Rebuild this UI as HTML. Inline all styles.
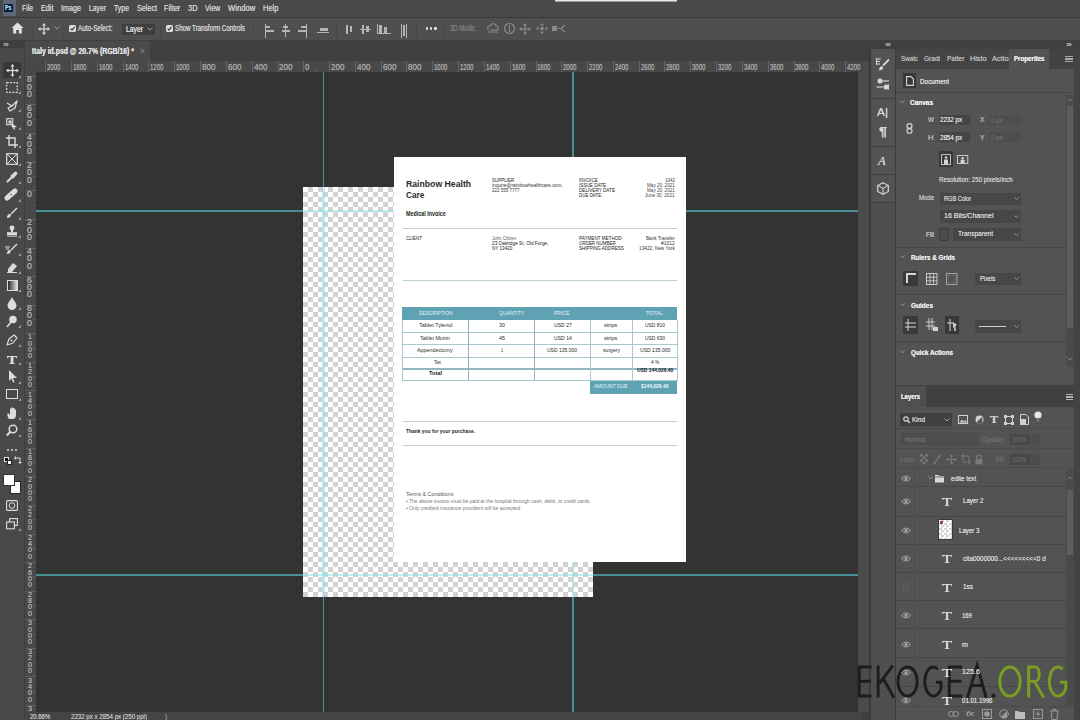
<!DOCTYPE html><html><head><meta charset="utf-8"><style>
*{margin:0;padding:0;box-sizing:border-box}
html,body{width:1080px;height:720px;overflow:hidden;background:#333;font-family:"Liberation Sans",sans-serif;color:#d0d0d0}
.a{position:absolute}
.t{position:absolute;white-space:nowrap;line-height:1;transform-origin:0 0}
svg{overflow:visible}
.t,svg{z-index:2}
.t{text-shadow:0 0 0.5px currentColor}
</style></head><body>
<div class="a" style="left:0px;top:0px;width:1080px;height:17px;background:#4a4a4a;"></div>
<div class="a" style="left:0px;top:17px;width:1080px;height:1px;background:#3a3a3a;"></div>
<div class="a" style="left:0px;top:18px;width:1080px;height:22px;background:#4f4f4f;"></div>
<div class="a" style="left:0px;top:40px;width:1080px;height:680px;background:#3f3f3f;"></div>
<div class="a" style="left:0px;top:40px;width:24px;height:680px;background:#494949;"></div>
<div class="a" style="left:25px;top:40px;width:838px;height:21px;background:#404040;"></div>
<div class="a" style="left:25px;top:41px;width:125px;height:20px;background:#4a4a4a;"></div>
<div class="a" style="left:25px;top:61px;width:838px;height:11px;background:#484848;"></div>
<div class="a" style="left:25px;top:72px;width:11px;height:640px;background:#484848;"></div>
<div class="a" style="left:36px;top:72px;width:822px;height:640px;background:#333333;"></div>
<div class="a" style="left:858px;top:72px;width:11px;height:640px;background:#4b4b4b;"></div>
<div class="a" style="left:25px;top:712px;width:838px;height:8px;background:#444444;"></div>
<div class="a" style="left:871px;top:49px;width:24px;height:671px;background:#4f4f4f;"></div>
<div class="a" style="left:896px;top:49px;width:178px;height:336px;background:#535353;"></div>
<div class="a" style="left:896px;top:385px;width:178px;height:335px;background:#535353;"></div>
<div class="a" style="left:2.5px;top:0px;width:13.5px;height:16px;background:#5d6778;"></div>
<div class="a" style="left:4px;top:4px;width:8.5px;height:8px;background:#03203a;border-radius:1px"></div>
<div class="t" style="left:5.00px;top:5.07px;font-size:6.5px;color:#9fd6e0;font-weight:bold;font-family:'Liberation Sans';transform:scaleX(0.792);">Ps</div>
<div class="t" style="left:22.00px;top:4.16px;font-size:9px;color:#d4d4d4;font-weight:normal;font-family:'Liberation Sans';transform:scaleX(0.758);">File</div>
<div class="t" style="left:40.50px;top:4.16px;font-size:9px;color:#d4d4d4;font-weight:normal;font-family:'Liberation Sans';transform:scaleX(0.806);">Edit</div>
<div class="t" style="left:61.00px;top:4.16px;font-size:9px;color:#d4d4d4;font-weight:normal;font-family:'Liberation Sans';transform:scaleX(0.800);">Image</div>
<div class="t" style="left:89.00px;top:4.16px;font-size:9px;color:#d4d4d4;font-weight:normal;font-family:'Liberation Sans';transform:scaleX(0.755);">Layer</div>
<div class="t" style="left:114.00px;top:4.16px;font-size:9px;color:#d4d4d4;font-weight:normal;font-family:'Liberation Sans';transform:scaleX(0.769);">Type</div>
<div class="t" style="left:136.70px;top:4.16px;font-size:9px;color:#d4d4d4;font-weight:normal;font-family:'Liberation Sans';transform:scaleX(0.800);">Select</div>
<div class="t" style="left:163.80px;top:4.16px;font-size:9px;color:#d4d4d4;font-weight:normal;font-family:'Liberation Sans';transform:scaleX(0.810);">Filter</div>
<div class="t" style="left:187.50px;top:4.16px;font-size:9px;color:#d4d4d4;font-weight:normal;font-family:'Liberation Sans';transform:scaleX(0.825);">3D</div>
<div class="t" style="left:204.80px;top:4.16px;font-size:9px;color:#d4d4d4;font-weight:normal;font-family:'Liberation Sans';transform:scaleX(0.785);">View</div>
<div class="t" style="left:227.80px;top:4.16px;font-size:9px;color:#d4d4d4;font-weight:normal;font-family:'Liberation Sans';transform:scaleX(0.850);">Window</div>
<div class="t" style="left:262.60px;top:4.16px;font-size:9px;color:#d4d4d4;font-weight:normal;font-family:'Liberation Sans';transform:scaleX(0.832);">Help</div>
<div class="a" style="left:555px;top:0px;width:122px;height:2px;background:#e6e6e6;border-bottom:1px solid #999"></div>
<div class="a" style="left:0px;top:40px;width:24px;height:8px;background:#3e3e3e;"></div>
<svg class="a" style="left:11px;top:22px;" width="13" height="12" viewBox="0 0 13 12" fill="none"><path d="M6.5 0.5 L12.5 6 L10.8 6 L10.8 11.5 L7.8 11.5 L7.8 8 L5.2 8 L5.2 11.5 L2.2 11.5 L2.2 6 L0.5 6 Z" fill="#e0e0e0"/></svg>
<svg class="a" style="left:37.5px;top:22.5px;" width="12" height="12" viewBox="0 0 12 12" fill="none"><g stroke="#d8d8d8" stroke-width="1.2"><line x1="6" y1="1.5" x2="6" y2="10.5"/><line x1="1.5" y1="6" x2="10.5" y2="6"/></g><g fill="#d8d8d8"><path d="M6 0 l-2 2.5 h4z"/><path d="M6 12 l-2 -2.5 h4z"/><path d="M0 6 l2.5 -2 v4z"/><path d="M12 6 l-2.5 -2 v4z"/></g></svg>
<svg class="a" style="left:54px;top:26px;" width="6" height="4" viewBox="0 0 6 4" fill="none"><path d="M0.5 0.5 L3 3 L5.5 0.5" stroke="#9a9a9a" stroke-width="1"/></svg>
<div class="a" style="left:32px;top:21px;width:1px;height:16px;background:#474747;"></div>
<div class="a" style="left:63px;top:21px;width:1px;height:16px;background:#474747;"></div>
<div class="a" style="left:69.0px;top:25.0px;width:7px;height:7px;background:#dcdcdc;border-radius:1.5px"></div>
<svg class="a" style="left:69.0px;top:25.0px;" width="7" height="7" viewBox="0 0 7 7" fill="none"><path d="M1.6 3.7 L3 5.1 L5.6 1.9" stroke="#3a3a3a" stroke-width="1.2"/></svg>
<div class="t" style="left:78.00px;top:24.46px;font-size:9px;color:#d6d6d6;font-weight:normal;font-family:'Liberation Sans';transform:scaleX(0.704);">Auto-Select:</div>
<div class="a" style="left:121.5px;top:23.5px;width:33px;height:11.5px;background:#3e3e3e;border-radius:1px"></div>
<div class="t" style="left:126.00px;top:24.90px;font-size:8.5px;color:#e0e0e0;font-weight:normal;font-family:'Liberation Sans';transform:scaleX(0.799);">Layer</div>
<svg class="a" style="left:147px;top:27px;" width="6" height="4" viewBox="0 0 6 4" fill="none"><path d="M0.5 0.5 L3 3 L5.5 0.5" stroke="#9a9a9a" stroke-width="1"/></svg>
<div class="a" style="left:160px;top:21px;width:1px;height:16px;background:#474747;"></div>
<div class="a" style="left:165.5px;top:25.0px;width:7px;height:7px;background:#dcdcdc;border-radius:1.5px"></div>
<svg class="a" style="left:165.5px;top:25.0px;" width="7" height="7" viewBox="0 0 7 7" fill="none"><path d="M1.6 3.7 L3 5.1 L5.6 1.9" stroke="#3a3a3a" stroke-width="1.2"/></svg>
<div class="t" style="left:175.00px;top:24.46px;font-size:9px;color:#d6d6d6;font-weight:normal;font-family:'Liberation Sans';transform:scaleX(0.689);">Show Transform Controls</div>
<div class="a" style="left:253px;top:21px;width:1px;height:16px;background:#474747;"></div>
<div class="a" style="left:265px;top:24px;width:1px;height:14px;background:#b4b4b4;"></div>
<div class="a" style="left:266px;top:26px;width:4px;height:2px;background:#b4b4b4;"></div>
<div class="a" style="left:266px;top:30px;width:8px;height:2px;background:#b4b4b4;"></div>
<div class="a" style="left:285px;top:24px;width:1px;height:13px;background:#b4b4b4;"></div>
<div class="a" style="left:283px;top:26px;width:5px;height:2px;background:#b4b4b4;"></div>
<div class="a" style="left:281.5px;top:30px;width:8px;height:2px;background:#b4b4b4;"></div>
<div class="a" style="left:306px;top:24px;width:1px;height:14px;background:#b4b4b4;"></div>
<div class="a" style="left:301px;top:26px;width:5px;height:2px;background:#b4b4b4;"></div>
<div class="a" style="left:298px;top:30px;width:8px;height:2px;background:#b4b4b4;"></div>
<div class="a" style="left:320px;top:28px;width:8px;height:3px;background:#b4b4b4;"></div>
<div class="a" style="left:317px;top:32px;width:12px;height:1px;background:#b4b4b4;"></div>
<div class="a" style="left:336px;top:21px;width:1px;height:16px;background:#474747;"></div>
<div class="a" style="left:346px;top:25px;width:2px;height:9px;background:#b4b4b4;"></div>
<div class="a" style="left:350px;top:26px;width:2px;height:6px;background:#b4b4b4;"></div>
<div class="a" style="left:362px;top:25px;width:2px;height:9px;background:#b4b4b4;"></div>
<div class="a" style="left:366px;top:26px;width:3px;height:6px;background:#b4b4b4;"></div>
<div class="a" style="left:360px;top:29px;width:11px;height:1px;background:#b4b4b4;"></div>
<div class="a" style="left:377px;top:24px;width:1px;height:10px;background:#b4b4b4;"></div>
<div class="a" style="left:379px;top:25px;width:3px;height:8px;background:#b4b4b4;"></div>
<div class="a" style="left:384px;top:27px;width:3px;height:6px;background:#b4b4b4;"></div>
<div class="a" style="left:377px;top:33px;width:14px;height:1px;background:#b4b4b4;"></div>
<div class="a" style="left:401px;top:24px;width:1px;height:14px;background:#b4b4b4;"></div>
<div class="a" style="left:403px;top:25px;width:2px;height:11px;background:#b4b4b4;"></div>
<div class="a" style="left:406px;top:24px;width:1px;height:14px;background:#b4b4b4;"></div>
<div class="a" style="left:416px;top:21px;width:1px;height:16px;background:#474747;"></div>
<div class="a" style="left:425.5px;top:27px;width:2.6px;height:2.6px;background:#e6e6e6;border-radius:50%"></div>
<div class="a" style="left:429.8px;top:27px;width:2.6px;height:2.6px;background:#e6e6e6;border-radius:50%"></div>
<div class="a" style="left:434.1px;top:27px;width:2.6px;height:2.6px;background:#e6e6e6;border-radius:50%"></div>
<div class="a" style="left:443px;top:21px;width:1px;height:16px;background:#474747;"></div>
<div class="t" style="left:450.00px;top:24.40px;font-size:8.5px;color:#7e7e7e;font-weight:normal;font-family:'Liberation Sans';transform:scaleX(0.705);">3D Mode:</div>
<svg class="a" style="left:486px;top:22px;" width="14" height="12" viewBox="0 0 14 12" fill="none"><path d="M3 7 C1 7 1 4 4 4 C5 1 10 1 10 4 C13 4 13 8 10 8 L4 8" stroke="#8a8a8a" stroke-width="1.2"/><path d="M2 10 L12 10" stroke="#8a8a8a" stroke-width="1"/></svg>
<svg class="a" style="left:503px;top:22px;" width="13" height="13" viewBox="0 0 13 13" fill="none"><circle cx="6.5" cy="6.5" r="5" stroke="#8a8a8a" stroke-width="1.2"/><path d="M6.5 3 V10" stroke="#8a8a8a" stroke-width="1"/></svg>
<svg class="a" style="left:519px;top:22.5px;" width="12" height="12" viewBox="0 0 12 12" fill="none"><g stroke="#8a8a8a" stroke-width="1.1"><line x1="6" y1="1.5" x2="6" y2="10.5"/><line x1="1.5" y1="6" x2="10.5" y2="6"/></g><g fill="#8a8a8a"><path d="M6 0 l-2 2.5 h4z"/><path d="M6 12 l-2 -2.5 h4z"/><path d="M0 6 l2.5 -2 v4z"/><path d="M12 6 l-2.5 -2 v4z"/></g></svg>
<svg class="a" style="left:536px;top:23px;" width="12" height="11" viewBox="0 0 12 11" fill="none"><g fill="#8a8a8a"><path d="M6 0 l-2 2.5 h4z"/><path d="M6 11 l-2 -2.5 h4z"/><path d="M0 5.5 l2.5 -2 v4z"/><path d="M12 5.5 l-2.5 -2 v4z"/></g><rect x="4.5" y="4" width="3" height="3" fill="#8a8a8a"/></svg>
<svg class="a" style="left:552px;top:23px;" width="13" height="11" viewBox="0 0 13 11" fill="none"><rect x="0" y="3" width="5" height="5" fill="#8a8a8a"/><path d="M6 5.5 h3 M13 2 L9 5.5 L13 9" stroke="#8a8a8a" stroke-width="1.2"/></svg>
<div class="t" style="left:3.00px;top:41.14px;font-size:8px;color:#bdbdbd;font-weight:normal;font-family:'Liberation Sans';transform:scaleX(1.347);">»</div>
<div class="t" style="left:32.00px;top:47.16px;font-size:9px;color:#e2e2e2;font-weight:bold;font-family:'Liberation Sans';transform:scaleX(0.765);">Italy id.psd @ 20.7% (RGB/16) *</div>
<div class="t" style="left:139.50px;top:47.16px;font-size:9px;color:#7a7a7a;font-weight:normal;font-family:'Liberation Sans';transform:scaleX(0.950);">×</div>
<div class="a" style="left:45px;top:61px;width:1px;height:11px;background:#646464;"></div>
<div class="a" style="left:58px;top:69px;width:1px;height:3px;background:#5e5e5e;"></div>
<div class="t" style="left:47.10px;top:62.96px;font-size:9px;color:#a9a9a9;font-weight:normal;font-family:'Liberation Sans';transform:scaleX(0.669);">2000</div>
<div class="a" style="left:71px;top:61px;width:1px;height:11px;background:#646464;"></div>
<div class="a" style="left:84px;top:69px;width:1px;height:3px;background:#5e5e5e;"></div>
<div class="t" style="left:72.90px;top:62.96px;font-size:9px;color:#a9a9a9;font-weight:normal;font-family:'Liberation Sans';transform:scaleX(0.669);">1800</div>
<div class="a" style="left:97px;top:61px;width:1px;height:11px;background:#646464;"></div>
<div class="a" style="left:110px;top:69px;width:1px;height:3px;background:#5e5e5e;"></div>
<div class="t" style="left:98.70px;top:62.96px;font-size:9px;color:#a9a9a9;font-weight:normal;font-family:'Liberation Sans';transform:scaleX(0.669);">1600</div>
<div class="a" style="left:123px;top:61px;width:1px;height:11px;background:#646464;"></div>
<div class="a" style="left:136px;top:69px;width:1px;height:3px;background:#5e5e5e;"></div>
<div class="t" style="left:124.50px;top:62.96px;font-size:9px;color:#a9a9a9;font-weight:normal;font-family:'Liberation Sans';transform:scaleX(0.669);">1400</div>
<div class="a" style="left:148px;top:61px;width:1px;height:11px;background:#646464;"></div>
<div class="a" style="left:161px;top:69px;width:1px;height:3px;background:#5e5e5e;"></div>
<div class="t" style="left:150.30px;top:62.96px;font-size:9px;color:#a9a9a9;font-weight:normal;font-family:'Liberation Sans';transform:scaleX(0.669);">1200</div>
<div class="a" style="left:174px;top:61px;width:1px;height:11px;background:#646464;"></div>
<div class="a" style="left:187px;top:69px;width:1px;height:3px;background:#5e5e5e;"></div>
<div class="t" style="left:176.10px;top:62.96px;font-size:9px;color:#a9a9a9;font-weight:normal;font-family:'Liberation Sans';transform:scaleX(0.669);">1000</div>
<div class="a" style="left:200px;top:61px;width:1px;height:11px;background:#646464;"></div>
<div class="a" style="left:213px;top:69px;width:1px;height:3px;background:#5e5e5e;"></div>
<div class="t" style="left:201.90px;top:62.96px;font-size:9px;color:#a9a9a9;font-weight:normal;font-family:'Liberation Sans';transform:scaleX(0.891);">800</div>
<div class="a" style="left:226px;top:61px;width:1px;height:11px;background:#646464;"></div>
<div class="a" style="left:239px;top:69px;width:1px;height:3px;background:#5e5e5e;"></div>
<div class="t" style="left:227.70px;top:62.96px;font-size:9px;color:#a9a9a9;font-weight:normal;font-family:'Liberation Sans';transform:scaleX(0.891);">600</div>
<div class="a" style="left:252px;top:61px;width:1px;height:11px;background:#646464;"></div>
<div class="a" style="left:265px;top:69px;width:1px;height:3px;background:#5e5e5e;"></div>
<div class="t" style="left:253.50px;top:62.96px;font-size:9px;color:#a9a9a9;font-weight:normal;font-family:'Liberation Sans';transform:scaleX(0.891);">400</div>
<div class="a" style="left:278px;top:61px;width:1px;height:11px;background:#646464;"></div>
<div class="a" style="left:290px;top:69px;width:1px;height:3px;background:#5e5e5e;"></div>
<div class="t" style="left:279.30px;top:62.96px;font-size:9px;color:#a9a9a9;font-weight:normal;font-family:'Liberation Sans';transform:scaleX(0.891);">200</div>
<div class="a" style="left:303px;top:61px;width:1px;height:11px;background:#646464;"></div>
<div class="a" style="left:316px;top:69px;width:1px;height:3px;background:#5e5e5e;"></div>
<div class="t" style="left:305.10px;top:62.96px;font-size:9px;color:#a9a9a9;font-weight:normal;font-family:'Liberation Sans';transform:scaleX(0.857);">0</div>
<div class="a" style="left:329px;top:61px;width:1px;height:11px;background:#646464;"></div>
<div class="a" style="left:342px;top:69px;width:1px;height:3px;background:#5e5e5e;"></div>
<div class="t" style="left:330.90px;top:62.96px;font-size:9px;color:#a9a9a9;font-weight:normal;font-family:'Liberation Sans';transform:scaleX(0.891);">200</div>
<div class="a" style="left:355px;top:61px;width:1px;height:11px;background:#646464;"></div>
<div class="a" style="left:368px;top:69px;width:1px;height:3px;background:#5e5e5e;"></div>
<div class="t" style="left:356.70px;top:62.96px;font-size:9px;color:#a9a9a9;font-weight:normal;font-family:'Liberation Sans';transform:scaleX(0.891);">400</div>
<div class="a" style="left:381px;top:61px;width:1px;height:11px;background:#646464;"></div>
<div class="a" style="left:394px;top:69px;width:1px;height:3px;background:#5e5e5e;"></div>
<div class="t" style="left:382.50px;top:62.96px;font-size:9px;color:#a9a9a9;font-weight:normal;font-family:'Liberation Sans';transform:scaleX(0.891);">600</div>
<div class="a" style="left:406px;top:61px;width:1px;height:11px;background:#646464;"></div>
<div class="a" style="left:419px;top:69px;width:1px;height:3px;background:#5e5e5e;"></div>
<div class="t" style="left:408.30px;top:62.96px;font-size:9px;color:#a9a9a9;font-weight:normal;font-family:'Liberation Sans';transform:scaleX(0.891);">800</div>
<div class="a" style="left:432px;top:61px;width:1px;height:11px;background:#646464;"></div>
<div class="a" style="left:445px;top:69px;width:1px;height:3px;background:#5e5e5e;"></div>
<div class="t" style="left:434.10px;top:62.96px;font-size:9px;color:#a9a9a9;font-weight:normal;font-family:'Liberation Sans';transform:scaleX(0.669);">1000</div>
<div class="a" style="left:458px;top:61px;width:1px;height:11px;background:#646464;"></div>
<div class="a" style="left:471px;top:69px;width:1px;height:3px;background:#5e5e5e;"></div>
<div class="t" style="left:459.90px;top:62.96px;font-size:9px;color:#a9a9a9;font-weight:normal;font-family:'Liberation Sans';transform:scaleX(0.669);">1200</div>
<div class="a" style="left:484px;top:61px;width:1px;height:11px;background:#646464;"></div>
<div class="a" style="left:497px;top:69px;width:1px;height:3px;background:#5e5e5e;"></div>
<div class="t" style="left:485.70px;top:62.96px;font-size:9px;color:#a9a9a9;font-weight:normal;font-family:'Liberation Sans';transform:scaleX(0.669);">1400</div>
<div class="a" style="left:510px;top:61px;width:1px;height:11px;background:#646464;"></div>
<div class="a" style="left:523px;top:69px;width:1px;height:3px;background:#5e5e5e;"></div>
<div class="t" style="left:511.50px;top:62.96px;font-size:9px;color:#a9a9a9;font-weight:normal;font-family:'Liberation Sans';transform:scaleX(0.669);">1600</div>
<div class="a" style="left:536px;top:61px;width:1px;height:11px;background:#646464;"></div>
<div class="a" style="left:548px;top:69px;width:1px;height:3px;background:#5e5e5e;"></div>
<div class="t" style="left:537.30px;top:62.96px;font-size:9px;color:#a9a9a9;font-weight:normal;font-family:'Liberation Sans';transform:scaleX(0.669);">1800</div>
<div class="a" style="left:561px;top:61px;width:1px;height:11px;background:#646464;"></div>
<div class="a" style="left:574px;top:69px;width:1px;height:3px;background:#5e5e5e;"></div>
<div class="t" style="left:563.10px;top:62.96px;font-size:9px;color:#a9a9a9;font-weight:normal;font-family:'Liberation Sans';transform:scaleX(0.669);">2000</div>
<div class="a" style="left:587px;top:61px;width:1px;height:11px;background:#646464;"></div>
<div class="a" style="left:600px;top:69px;width:1px;height:3px;background:#5e5e5e;"></div>
<div class="t" style="left:588.90px;top:62.96px;font-size:9px;color:#a9a9a9;font-weight:normal;font-family:'Liberation Sans';transform:scaleX(0.669);">2200</div>
<div class="a" style="left:613px;top:61px;width:1px;height:11px;background:#646464;"></div>
<div class="a" style="left:626px;top:69px;width:1px;height:3px;background:#5e5e5e;"></div>
<div class="t" style="left:614.70px;top:62.96px;font-size:9px;color:#a9a9a9;font-weight:normal;font-family:'Liberation Sans';transform:scaleX(0.669);">2400</div>
<div class="a" style="left:639px;top:61px;width:1px;height:11px;background:#646464;"></div>
<div class="a" style="left:652px;top:69px;width:1px;height:3px;background:#5e5e5e;"></div>
<div class="t" style="left:640.50px;top:62.96px;font-size:9px;color:#a9a9a9;font-weight:normal;font-family:'Liberation Sans';transform:scaleX(0.669);">2600</div>
<div class="a" style="left:664px;top:61px;width:1px;height:11px;background:#646464;"></div>
<div class="a" style="left:677px;top:69px;width:1px;height:3px;background:#5e5e5e;"></div>
<div class="t" style="left:666.30px;top:62.96px;font-size:9px;color:#a9a9a9;font-weight:normal;font-family:'Liberation Sans';transform:scaleX(0.669);">2800</div>
<div class="a" style="left:690px;top:61px;width:1px;height:11px;background:#646464;"></div>
<div class="a" style="left:703px;top:69px;width:1px;height:3px;background:#5e5e5e;"></div>
<div class="t" style="left:692.10px;top:62.96px;font-size:9px;color:#a9a9a9;font-weight:normal;font-family:'Liberation Sans';transform:scaleX(0.669);">3000</div>
<div class="a" style="left:716px;top:61px;width:1px;height:11px;background:#646464;"></div>
<div class="a" style="left:729px;top:69px;width:1px;height:3px;background:#5e5e5e;"></div>
<div class="t" style="left:717.90px;top:62.96px;font-size:9px;color:#a9a9a9;font-weight:normal;font-family:'Liberation Sans';transform:scaleX(0.669);">3200</div>
<div class="a" style="left:742px;top:61px;width:1px;height:11px;background:#646464;"></div>
<div class="a" style="left:755px;top:69px;width:1px;height:3px;background:#5e5e5e;"></div>
<div class="t" style="left:743.70px;top:62.96px;font-size:9px;color:#a9a9a9;font-weight:normal;font-family:'Liberation Sans';transform:scaleX(0.669);">3400</div>
<div class="a" style="left:768px;top:61px;width:1px;height:11px;background:#646464;"></div>
<div class="a" style="left:781px;top:69px;width:1px;height:3px;background:#5e5e5e;"></div>
<div class="t" style="left:769.50px;top:62.96px;font-size:9px;color:#a9a9a9;font-weight:normal;font-family:'Liberation Sans';transform:scaleX(0.669);">3600</div>
<div class="a" style="left:794px;top:61px;width:1px;height:11px;background:#646464;"></div>
<div class="a" style="left:806px;top:69px;width:1px;height:3px;background:#5e5e5e;"></div>
<div class="t" style="left:795.30px;top:62.96px;font-size:9px;color:#a9a9a9;font-weight:normal;font-family:'Liberation Sans';transform:scaleX(0.669);">3800</div>
<div class="a" style="left:819px;top:61px;width:1px;height:11px;background:#646464;"></div>
<div class="a" style="left:832px;top:69px;width:1px;height:3px;background:#5e5e5e;"></div>
<div class="t" style="left:821.10px;top:62.96px;font-size:9px;color:#a9a9a9;font-weight:normal;font-family:'Liberation Sans';transform:scaleX(0.669);">4000</div>
<div class="a" style="left:845px;top:61px;width:1px;height:11px;background:#646464;"></div>
<div class="t" style="left:846.90px;top:62.96px;font-size:9px;color:#a9a9a9;font-weight:normal;font-family:'Liberation Sans';transform:scaleX(0.669);">4200</div>
<div class="a" style="left:863px;top:61px;width:6px;height:11px;background:#4b4b4b;z-index:3"></div>
<div class="a" style="left:25px;top:76px;width:11px;height:1px;background:#5e5e5e;"></div>
<div class="a" style="left:33px;top:90px;width:3px;height:1px;background:#5e5e5e;"></div>
<div class="t" style="left:27.20px;top:75.30px;font-size:8.5px;color:#b0b0b0;font-weight:normal;font-family:'Liberation Sans';transform:scaleX(1.014);">8</div>
<div class="t" style="left:27.20px;top:82.60px;font-size:8.5px;color:#b0b0b0;font-weight:normal;font-family:'Liberation Sans';transform:scaleX(1.014);">0</div>
<div class="t" style="left:27.20px;top:89.90px;font-size:8.5px;color:#b0b0b0;font-weight:normal;font-family:'Liberation Sans';transform:scaleX(1.014);">0</div>
<div class="a" style="left:25px;top:104px;width:11px;height:1px;background:#5e5e5e;"></div>
<div class="a" style="left:33px;top:119px;width:3px;height:1px;background:#5e5e5e;"></div>
<div class="t" style="left:27.20px;top:103.90px;font-size:8.5px;color:#b0b0b0;font-weight:normal;font-family:'Liberation Sans';transform:scaleX(1.014);">6</div>
<div class="t" style="left:27.20px;top:111.20px;font-size:8.5px;color:#b0b0b0;font-weight:normal;font-family:'Liberation Sans';transform:scaleX(1.014);">0</div>
<div class="t" style="left:27.20px;top:118.50px;font-size:8.5px;color:#b0b0b0;font-weight:normal;font-family:'Liberation Sans';transform:scaleX(1.014);">0</div>
<div class="a" style="left:25px;top:133px;width:11px;height:1px;background:#5e5e5e;"></div>
<div class="a" style="left:33px;top:147px;width:3px;height:1px;background:#5e5e5e;"></div>
<div class="t" style="left:27.20px;top:132.50px;font-size:8.5px;color:#b0b0b0;font-weight:normal;font-family:'Liberation Sans';transform:scaleX(1.014);">4</div>
<div class="t" style="left:27.20px;top:139.80px;font-size:8.5px;color:#b0b0b0;font-weight:normal;font-family:'Liberation Sans';transform:scaleX(1.014);">0</div>
<div class="t" style="left:27.20px;top:147.10px;font-size:8.5px;color:#b0b0b0;font-weight:normal;font-family:'Liberation Sans';transform:scaleX(1.014);">0</div>
<div class="a" style="left:25px;top:162px;width:11px;height:1px;background:#5e5e5e;"></div>
<div class="a" style="left:33px;top:176px;width:3px;height:1px;background:#5e5e5e;"></div>
<div class="t" style="left:27.20px;top:161.10px;font-size:8.5px;color:#b0b0b0;font-weight:normal;font-family:'Liberation Sans';transform:scaleX(1.014);">2</div>
<div class="t" style="left:27.20px;top:168.40px;font-size:8.5px;color:#b0b0b0;font-weight:normal;font-family:'Liberation Sans';transform:scaleX(1.014);">0</div>
<div class="t" style="left:27.20px;top:175.70px;font-size:8.5px;color:#b0b0b0;font-weight:normal;font-family:'Liberation Sans';transform:scaleX(1.014);">0</div>
<div class="a" style="left:25px;top:190px;width:11px;height:1px;background:#5e5e5e;"></div>
<div class="a" style="left:33px;top:205px;width:3px;height:1px;background:#5e5e5e;"></div>
<div class="t" style="left:27.20px;top:189.70px;font-size:8.5px;color:#b0b0b0;font-weight:normal;font-family:'Liberation Sans';transform:scaleX(1.014);">0</div>
<div class="a" style="left:25px;top:219px;width:11px;height:1px;background:#5e5e5e;"></div>
<div class="a" style="left:33px;top:233px;width:3px;height:1px;background:#5e5e5e;"></div>
<div class="t" style="left:27.20px;top:218.30px;font-size:8.5px;color:#b0b0b0;font-weight:normal;font-family:'Liberation Sans';transform:scaleX(1.014);">2</div>
<div class="t" style="left:27.20px;top:225.60px;font-size:8.5px;color:#b0b0b0;font-weight:normal;font-family:'Liberation Sans';transform:scaleX(1.014);">0</div>
<div class="t" style="left:27.20px;top:232.90px;font-size:8.5px;color:#b0b0b0;font-weight:normal;font-family:'Liberation Sans';transform:scaleX(1.014);">0</div>
<div class="a" style="left:25px;top:248px;width:11px;height:1px;background:#5e5e5e;"></div>
<div class="a" style="left:33px;top:262px;width:3px;height:1px;background:#5e5e5e;"></div>
<div class="t" style="left:27.20px;top:246.90px;font-size:8.5px;color:#b0b0b0;font-weight:normal;font-family:'Liberation Sans';transform:scaleX(1.014);">4</div>
<div class="t" style="left:27.20px;top:254.20px;font-size:8.5px;color:#b0b0b0;font-weight:normal;font-family:'Liberation Sans';transform:scaleX(1.014);">0</div>
<div class="t" style="left:27.20px;top:261.50px;font-size:8.5px;color:#b0b0b0;font-weight:normal;font-family:'Liberation Sans';transform:scaleX(1.014);">0</div>
<div class="a" style="left:25px;top:276px;width:11px;height:1px;background:#5e5e5e;"></div>
<div class="a" style="left:33px;top:290px;width:3px;height:1px;background:#5e5e5e;"></div>
<div class="t" style="left:27.20px;top:275.50px;font-size:8.5px;color:#b0b0b0;font-weight:normal;font-family:'Liberation Sans';transform:scaleX(1.014);">6</div>
<div class="t" style="left:27.20px;top:282.80px;font-size:8.5px;color:#b0b0b0;font-weight:normal;font-family:'Liberation Sans';transform:scaleX(1.014);">0</div>
<div class="t" style="left:27.20px;top:290.10px;font-size:8.5px;color:#b0b0b0;font-weight:normal;font-family:'Liberation Sans';transform:scaleX(1.014);">0</div>
<div class="a" style="left:25px;top:305px;width:11px;height:1px;background:#5e5e5e;"></div>
<div class="a" style="left:33px;top:319px;width:3px;height:1px;background:#5e5e5e;"></div>
<div class="t" style="left:27.20px;top:304.10px;font-size:8.5px;color:#b0b0b0;font-weight:normal;font-family:'Liberation Sans';transform:scaleX(1.014);">8</div>
<div class="t" style="left:27.20px;top:311.40px;font-size:8.5px;color:#b0b0b0;font-weight:normal;font-family:'Liberation Sans';transform:scaleX(1.014);">0</div>
<div class="t" style="left:27.20px;top:318.70px;font-size:8.5px;color:#b0b0b0;font-weight:normal;font-family:'Liberation Sans';transform:scaleX(1.014);">0</div>
<div class="a" style="left:25px;top:333px;width:11px;height:1px;background:#5e5e5e;"></div>
<div class="a" style="left:33px;top:348px;width:3px;height:1px;background:#5e5e5e;"></div>
<div class="t" style="left:27.60px;top:333.43px;font-size:7px;color:#b0b0b0;font-weight:normal;font-family:'Liberation Sans';transform:scaleX(1.024);">1</div>
<div class="t" style="left:27.60px;top:339.73px;font-size:7px;color:#b0b0b0;font-weight:normal;font-family:'Liberation Sans';transform:scaleX(1.024);">0</div>
<div class="t" style="left:27.60px;top:346.03px;font-size:7px;color:#b0b0b0;font-weight:normal;font-family:'Liberation Sans';transform:scaleX(1.024);">0</div>
<div class="t" style="left:27.60px;top:352.33px;font-size:7px;color:#b0b0b0;font-weight:normal;font-family:'Liberation Sans';transform:scaleX(1.024);">0</div>
<div class="a" style="left:25px;top:362px;width:11px;height:1px;background:#5e5e5e;"></div>
<div class="a" style="left:33px;top:376px;width:3px;height:1px;background:#5e5e5e;"></div>
<div class="t" style="left:27.60px;top:362.03px;font-size:7px;color:#b0b0b0;font-weight:normal;font-family:'Liberation Sans';transform:scaleX(1.024);">1</div>
<div class="t" style="left:27.60px;top:368.33px;font-size:7px;color:#b0b0b0;font-weight:normal;font-family:'Liberation Sans';transform:scaleX(1.024);">2</div>
<div class="t" style="left:27.60px;top:374.63px;font-size:7px;color:#b0b0b0;font-weight:normal;font-family:'Liberation Sans';transform:scaleX(1.024);">0</div>
<div class="t" style="left:27.60px;top:380.93px;font-size:7px;color:#b0b0b0;font-weight:normal;font-family:'Liberation Sans';transform:scaleX(1.024);">0</div>
<div class="a" style="left:25px;top:390px;width:11px;height:1px;background:#5e5e5e;"></div>
<div class="a" style="left:33px;top:405px;width:3px;height:1px;background:#5e5e5e;"></div>
<div class="t" style="left:27.60px;top:390.63px;font-size:7px;color:#b0b0b0;font-weight:normal;font-family:'Liberation Sans';transform:scaleX(1.024);">1</div>
<div class="t" style="left:27.60px;top:396.93px;font-size:7px;color:#b0b0b0;font-weight:normal;font-family:'Liberation Sans';transform:scaleX(1.024);">4</div>
<div class="t" style="left:27.60px;top:403.23px;font-size:7px;color:#b0b0b0;font-weight:normal;font-family:'Liberation Sans';transform:scaleX(1.024);">0</div>
<div class="t" style="left:27.60px;top:409.53px;font-size:7px;color:#b0b0b0;font-weight:normal;font-family:'Liberation Sans';transform:scaleX(1.024);">0</div>
<div class="a" style="left:25px;top:419px;width:11px;height:1px;background:#5e5e5e;"></div>
<div class="a" style="left:33px;top:433px;width:3px;height:1px;background:#5e5e5e;"></div>
<div class="t" style="left:27.60px;top:419.23px;font-size:7px;color:#b0b0b0;font-weight:normal;font-family:'Liberation Sans';transform:scaleX(1.024);">1</div>
<div class="t" style="left:27.60px;top:425.53px;font-size:7px;color:#b0b0b0;font-weight:normal;font-family:'Liberation Sans';transform:scaleX(1.024);">6</div>
<div class="t" style="left:27.60px;top:431.83px;font-size:7px;color:#b0b0b0;font-weight:normal;font-family:'Liberation Sans';transform:scaleX(1.024);">0</div>
<div class="t" style="left:27.60px;top:438.13px;font-size:7px;color:#b0b0b0;font-weight:normal;font-family:'Liberation Sans';transform:scaleX(1.024);">0</div>
<div class="a" style="left:25px;top:448px;width:11px;height:1px;background:#5e5e5e;"></div>
<div class="a" style="left:33px;top:462px;width:3px;height:1px;background:#5e5e5e;"></div>
<div class="t" style="left:27.60px;top:447.83px;font-size:7px;color:#b0b0b0;font-weight:normal;font-family:'Liberation Sans';transform:scaleX(1.024);">1</div>
<div class="t" style="left:27.60px;top:454.13px;font-size:7px;color:#b0b0b0;font-weight:normal;font-family:'Liberation Sans';transform:scaleX(1.024);">8</div>
<div class="t" style="left:27.60px;top:460.43px;font-size:7px;color:#b0b0b0;font-weight:normal;font-family:'Liberation Sans';transform:scaleX(1.024);">0</div>
<div class="t" style="left:27.60px;top:466.73px;font-size:7px;color:#b0b0b0;font-weight:normal;font-family:'Liberation Sans';transform:scaleX(1.024);">0</div>
<div class="a" style="left:25px;top:476px;width:11px;height:1px;background:#5e5e5e;"></div>
<div class="a" style="left:33px;top:491px;width:3px;height:1px;background:#5e5e5e;"></div>
<div class="t" style="left:27.60px;top:476.43px;font-size:7px;color:#b0b0b0;font-weight:normal;font-family:'Liberation Sans';transform:scaleX(1.024);">2</div>
<div class="t" style="left:27.60px;top:482.73px;font-size:7px;color:#b0b0b0;font-weight:normal;font-family:'Liberation Sans';transform:scaleX(1.024);">0</div>
<div class="t" style="left:27.60px;top:489.03px;font-size:7px;color:#b0b0b0;font-weight:normal;font-family:'Liberation Sans';transform:scaleX(1.024);">0</div>
<div class="t" style="left:27.60px;top:495.33px;font-size:7px;color:#b0b0b0;font-weight:normal;font-family:'Liberation Sans';transform:scaleX(1.024);">0</div>
<div class="a" style="left:25px;top:505px;width:11px;height:1px;background:#5e5e5e;"></div>
<div class="a" style="left:33px;top:519px;width:3px;height:1px;background:#5e5e5e;"></div>
<div class="t" style="left:27.60px;top:505.03px;font-size:7px;color:#b0b0b0;font-weight:normal;font-family:'Liberation Sans';transform:scaleX(1.024);">2</div>
<div class="t" style="left:27.60px;top:511.33px;font-size:7px;color:#b0b0b0;font-weight:normal;font-family:'Liberation Sans';transform:scaleX(1.024);">2</div>
<div class="t" style="left:27.60px;top:517.63px;font-size:7px;color:#b0b0b0;font-weight:normal;font-family:'Liberation Sans';transform:scaleX(1.024);">0</div>
<div class="t" style="left:27.60px;top:523.93px;font-size:7px;color:#b0b0b0;font-weight:normal;font-family:'Liberation Sans';transform:scaleX(1.024);">0</div>
<div class="a" style="left:25px;top:534px;width:11px;height:1px;background:#5e5e5e;"></div>
<div class="a" style="left:33px;top:548px;width:3px;height:1px;background:#5e5e5e;"></div>
<div class="t" style="left:27.60px;top:533.63px;font-size:7px;color:#b0b0b0;font-weight:normal;font-family:'Liberation Sans';transform:scaleX(1.024);">2</div>
<div class="t" style="left:27.60px;top:539.93px;font-size:7px;color:#b0b0b0;font-weight:normal;font-family:'Liberation Sans';transform:scaleX(1.024);">4</div>
<div class="t" style="left:27.60px;top:546.23px;font-size:7px;color:#b0b0b0;font-weight:normal;font-family:'Liberation Sans';transform:scaleX(1.024);">0</div>
<div class="t" style="left:27.60px;top:552.53px;font-size:7px;color:#b0b0b0;font-weight:normal;font-family:'Liberation Sans';transform:scaleX(1.024);">0</div>
<div class="a" style="left:25px;top:562px;width:11px;height:1px;background:#5e5e5e;"></div>
<div class="a" style="left:33px;top:576px;width:3px;height:1px;background:#5e5e5e;"></div>
<div class="t" style="left:27.60px;top:562.23px;font-size:7px;color:#b0b0b0;font-weight:normal;font-family:'Liberation Sans';transform:scaleX(1.024);">2</div>
<div class="t" style="left:27.60px;top:568.53px;font-size:7px;color:#b0b0b0;font-weight:normal;font-family:'Liberation Sans';transform:scaleX(1.024);">6</div>
<div class="t" style="left:27.60px;top:574.83px;font-size:7px;color:#b0b0b0;font-weight:normal;font-family:'Liberation Sans';transform:scaleX(1.024);">0</div>
<div class="t" style="left:27.60px;top:581.13px;font-size:7px;color:#b0b0b0;font-weight:normal;font-family:'Liberation Sans';transform:scaleX(1.024);">0</div>
<div class="a" style="left:25px;top:591px;width:11px;height:1px;background:#5e5e5e;"></div>
<div class="a" style="left:33px;top:605px;width:3px;height:1px;background:#5e5e5e;"></div>
<div class="t" style="left:27.60px;top:590.83px;font-size:7px;color:#b0b0b0;font-weight:normal;font-family:'Liberation Sans';transform:scaleX(1.024);">2</div>
<div class="t" style="left:27.60px;top:597.13px;font-size:7px;color:#b0b0b0;font-weight:normal;font-family:'Liberation Sans';transform:scaleX(1.024);">8</div>
<div class="t" style="left:27.60px;top:603.43px;font-size:7px;color:#b0b0b0;font-weight:normal;font-family:'Liberation Sans';transform:scaleX(1.024);">0</div>
<div class="t" style="left:27.60px;top:609.73px;font-size:7px;color:#b0b0b0;font-weight:normal;font-family:'Liberation Sans';transform:scaleX(1.024);">0</div>
<div class="a" style="left:25px;top:619px;width:11px;height:1px;background:#5e5e5e;"></div>
<div class="a" style="left:33px;top:634px;width:3px;height:1px;background:#5e5e5e;"></div>
<div class="t" style="left:27.60px;top:619.43px;font-size:7px;color:#b0b0b0;font-weight:normal;font-family:'Liberation Sans';transform:scaleX(1.024);">3</div>
<div class="t" style="left:27.60px;top:625.73px;font-size:7px;color:#b0b0b0;font-weight:normal;font-family:'Liberation Sans';transform:scaleX(1.024);">0</div>
<div class="t" style="left:27.60px;top:632.03px;font-size:7px;color:#b0b0b0;font-weight:normal;font-family:'Liberation Sans';transform:scaleX(1.024);">0</div>
<div class="t" style="left:27.60px;top:638.33px;font-size:7px;color:#b0b0b0;font-weight:normal;font-family:'Liberation Sans';transform:scaleX(1.024);">0</div>
<div class="a" style="left:25px;top:648px;width:11px;height:1px;background:#5e5e5e;"></div>
<div class="a" style="left:33px;top:662px;width:3px;height:1px;background:#5e5e5e;"></div>
<div class="t" style="left:27.60px;top:648.03px;font-size:7px;color:#b0b0b0;font-weight:normal;font-family:'Liberation Sans';transform:scaleX(1.024);">3</div>
<div class="t" style="left:27.60px;top:654.33px;font-size:7px;color:#b0b0b0;font-weight:normal;font-family:'Liberation Sans';transform:scaleX(1.024);">2</div>
<div class="t" style="left:27.60px;top:660.63px;font-size:7px;color:#b0b0b0;font-weight:normal;font-family:'Liberation Sans';transform:scaleX(1.024);">0</div>
<div class="t" style="left:27.60px;top:666.93px;font-size:7px;color:#b0b0b0;font-weight:normal;font-family:'Liberation Sans';transform:scaleX(1.024);">0</div>
<div class="a" style="left:25px;top:676px;width:11px;height:1px;background:#5e5e5e;"></div>
<div class="a" style="left:33px;top:691px;width:3px;height:1px;background:#5e5e5e;"></div>
<div class="t" style="left:27.60px;top:676.63px;font-size:7px;color:#b0b0b0;font-weight:normal;font-family:'Liberation Sans';transform:scaleX(1.024);">3</div>
<div class="t" style="left:27.60px;top:682.93px;font-size:7px;color:#b0b0b0;font-weight:normal;font-family:'Liberation Sans';transform:scaleX(1.024);">4</div>
<div class="t" style="left:27.60px;top:689.23px;font-size:7px;color:#b0b0b0;font-weight:normal;font-family:'Liberation Sans';transform:scaleX(1.024);">0</div>
<div class="t" style="left:27.60px;top:695.53px;font-size:7px;color:#b0b0b0;font-weight:normal;font-family:'Liberation Sans';transform:scaleX(1.024);">0</div>
<div class="a" style="left:25px;top:705px;width:11px;height:1px;background:#5e5e5e;"></div>
<div class="t" style="left:27.60px;top:705.23px;font-size:7px;color:#b0b0b0;font-weight:normal;font-family:'Liberation Sans';transform:scaleX(1.024);">3</div>
<div class="a" style="left:322.6px;top:72px;width:1.8px;height:640px;background:#468f93;"></div>
<div class="a" style="left:572px;top:72px;width:1.8px;height:640px;background:#468f93;"></div>
<div class="a" style="left:36px;top:210px;width:822px;height:1.8px;background:#468f93;"></div>
<div class="a" style="left:36px;top:574px;width:822px;height:1.8px;background:#468f93;"></div>
<div class="a" style="left:303px;top:187px;width:290px;height:410px;background:#fff;background:conic-gradient(#d2d2d2 0 25%,#fff 0 50%,#d2d2d2 0 75%,#fff 0) 0 0/10px 10px"></div>
<div class="a" style="left:322px;top:187px;width:2.5px;height:410px;background:rgba(130,225,230,0.5);"></div>
<div class="a" style="left:571.5px;top:187px;width:2.5px;height:410px;background:rgba(130,225,230,0.5);"></div>
<div class="a" style="left:303px;top:209.5px;width:290px;height:2.5px;background:rgba(130,225,230,0.5);"></div>
<div class="a" style="left:303px;top:573.5px;width:290px;height:2.5px;background:rgba(130,225,230,0.5);"></div>
<div class="a" style="left:394px;top:157px;width:292px;height:405px;background:#ffffff;"></div>
<div class="t" style="left:30.00px;top:712.63px;font-size:7px;color:#c8c8c8;font-weight:normal;font-family:'Liberation Sans';transform:scaleX(0.842);">20.66%</div>
<div class="t" style="left:71.00px;top:712.63px;font-size:7px;color:#c0c0c0;font-weight:normal;font-family:'Liberation Sans';transform:scaleX(0.876);">2232 px x 2854 px (250 ppi)</div>
<div class="t" style="left:165.00px;top:712.63px;font-size:7px;color:#a0a0a0;font-weight:normal;font-family:'Liberation Sans';transform:scaleX(0.853);">)</div>
<div class="t" style="left:405.80px;top:178.78px;font-size:9.8px;color:#2a2a2a;font-weight:bold;font-family:'Liberation Sans';transform:scaleX(0.886);text-shadow:none;">Rainbow Health</div>
<div class="t" style="left:405.80px;top:189.88px;font-size:9.8px;color:#2a2a2a;font-weight:bold;font-family:'Liberation Sans';transform:scaleX(0.835);text-shadow:none;">Care</div>
<div class="t" style="left:492.40px;top:177.21px;font-size:6px;color:#1c1c1c;font-weight:normal;font-family:'Liberation Sans';transform:scaleX(0.751);text-shadow:none;">SUPPLIER</div>
<div class="t" style="left:492.40px;top:182.41px;font-size:6px;color:#333;font-weight:normal;font-family:'Liberation Sans';transform:scaleX(0.804);text-shadow:none;">inquire@rainbowhealthcare.com,</div>
<div class="t" style="left:492.40px;top:186.81px;font-size:6px;color:#333;font-weight:normal;font-family:'Liberation Sans';transform:scaleX(0.749);text-shadow:none;">222 555 7777</div>
<div class="t" style="left:579.10px;top:177.21px;font-size:6px;color:#161616;font-weight:normal;font-family:'Liberation Sans';transform:scaleX(0.758);text-shadow:none;">INVOICE</div>
<div class="t" style="left:579.10px;top:181.91px;font-size:6px;color:#161616;font-weight:normal;font-family:'Liberation Sans';transform:scaleX(0.772);text-shadow:none;">ISSUE DATE</div>
<div class="t" style="left:579.10px;top:186.81px;font-size:6px;color:#161616;font-weight:normal;font-family:'Liberation Sans';transform:scaleX(0.771);text-shadow:none;">DELIVERY DATE</div>
<div class="t" style="left:579.10px;top:191.71px;font-size:6px;color:#161616;font-weight:normal;font-family:'Liberation Sans';transform:scaleX(0.742);text-shadow:none;">DUE DATE</div>
<div class="t" style="left:664.70px;top:177.21px;font-size:6px;color:#444;font-weight:normal;font-family:'Liberation Sans';transform:scaleX(0.756);text-shadow:none;">1042</div>
<div class="t" style="left:647.00px;top:181.91px;font-size:6px;color:#444;font-weight:normal;font-family:'Liberation Sans';transform:scaleX(0.765);text-shadow:none;">May 20, 2021</div>
<div class="t" style="left:647.00px;top:186.81px;font-size:6px;color:#444;font-weight:normal;font-family:'Liberation Sans';transform:scaleX(0.765);text-shadow:none;">May 20, 2021</div>
<div class="t" style="left:645.20px;top:191.71px;font-size:6px;color:#444;font-weight:normal;font-family:'Liberation Sans';transform:scaleX(0.778);text-shadow:none;">June 30, 2021</div>
<div class="t" style="left:405.50px;top:211.17px;font-size:6.5px;color:#262626;font-weight:bold;font-family:'Liberation Sans';transform:scaleX(0.828);text-shadow:none;">Medical Invoice</div>
<div class="a" style="left:403px;top:228px;width:274px;height:1px;background:#bccfd3;"></div>
<div class="t" style="left:405.50px;top:234.81px;font-size:6px;color:#1c1c1c;font-weight:normal;font-family:'Liberation Sans';transform:scaleX(0.754);text-shadow:none;">CLIENT</div>
<div class="t" style="left:492.40px;top:234.51px;font-size:6px;color:#555;font-weight:normal;font-family:'Liberation Sans';transform:scaleX(0.733);text-shadow:none;">John Citizen</div>
<div class="t" style="left:492.40px;top:240.11px;font-size:6px;color:#161616;font-weight:normal;font-family:'Liberation Sans';transform:scaleX(0.788);text-shadow:none;">23 Oakridge St, Old Forge,</div>
<div class="t" style="left:492.40px;top:244.91px;font-size:6px;color:#161616;font-weight:normal;font-family:'Liberation Sans';transform:scaleX(0.764);text-shadow:none;">NY 13420</div>
<div class="t" style="left:579.10px;top:234.91px;font-size:6px;color:#161616;font-weight:normal;font-family:'Liberation Sans';transform:scaleX(0.765);text-shadow:none;">PAYMENT METHOD</div>
<div class="t" style="left:579.10px;top:239.91px;font-size:6px;color:#161616;font-weight:normal;font-family:'Liberation Sans';transform:scaleX(0.742);text-shadow:none;">ORDER NUMBER</div>
<div class="t" style="left:579.10px;top:244.81px;font-size:6px;color:#161616;font-weight:normal;font-family:'Liberation Sans';transform:scaleX(0.759);text-shadow:none;">SHIPPING ADDRESS</div>
<div class="t" style="left:646.10px;top:234.91px;font-size:6px;color:#333;font-weight:normal;font-family:'Liberation Sans';transform:scaleX(0.768);text-shadow:none;">Bank Transfer</div>
<div class="t" style="left:661.20px;top:239.91px;font-size:6px;color:#333;font-weight:normal;font-family:'Liberation Sans';transform:scaleX(0.815);text-shadow:none;">#1012</div>
<div class="t" style="left:639.00px;top:244.81px;font-size:6px;color:#333;font-weight:normal;font-family:'Liberation Sans';transform:scaleX(0.789);text-shadow:none;">13422, New York</div>
<div class="a" style="left:403px;top:280px;width:274px;height:1px;background:#bccfd3;"></div>
<div class="a" style="left:402px;top:307px;width:275px;height:13px;background:#5fa2b3;"></div>
<div class="t" style="left:418.70px;top:310.89px;font-size:5px;color:#e4f2f5;font-weight:normal;font-family:'Liberation Sans';transform:scaleX(0.980);text-shadow:none;">DESCRIPTION</div>
<div class="t" style="left:499.00px;top:310.89px;font-size:5px;color:#e4f2f5;font-weight:normal;font-family:'Liberation Sans';transform:scaleX(1.005);text-shadow:none;">QUANTITY</div>
<div class="t" style="left:554.40px;top:310.89px;font-size:5px;color:#e4f2f5;font-weight:normal;font-family:'Liberation Sans';transform:scaleX(1.001);text-shadow:none;">PRICE</div>
<div class="t" style="left:646.30px;top:310.89px;font-size:5px;color:#e4f2f5;font-weight:normal;font-family:'Liberation Sans';transform:scaleX(1.086);text-shadow:none;">TOTAL</div>
<div class="a" style="left:402px;top:332px;width:275px;height:1px;background:#a9c8cf;"></div>
<div class="a" style="left:402px;top:344px;width:275px;height:1px;background:#a9c8cf;"></div>
<div class="a" style="left:402px;top:357px;width:275px;height:1px;background:#a9c8cf;"></div>
<div class="a" style="left:402px;top:368px;width:275px;height:1px;background:#a9c8cf;"></div>
<div class="a" style="left:402px;top:380px;width:275px;height:1px;background:#a9c8cf;"></div>
<div class="a" style="left:402px;top:368px;width:275px;height:2px;background:#8fb7c0;"></div>
<div class="a" style="left:402px;top:320px;width:1px;height:61px;background:#a9c8cf;"></div>
<div class="a" style="left:468px;top:320px;width:1px;height:61px;background:#a9c8cf;"></div>
<div class="a" style="left:534px;top:320px;width:1px;height:61px;background:#a9c8cf;"></div>
<div class="a" style="left:590px;top:320px;width:1px;height:61px;background:#a9c8cf;"></div>
<div class="a" style="left:632px;top:320px;width:1px;height:61px;background:#a9c8cf;"></div>
<div class="a" style="left:677px;top:320px;width:1px;height:61px;background:#a9c8cf;"></div>
<div class="a" style="left:468px;top:320px;width:1px;height:61px;background:#8fb7c0;"></div>
<div class="a" style="left:534px;top:320px;width:1px;height:61px;background:#8fb7c0;"></div>
<div class="t" style="left:418.70px;top:323.20px;font-size:5.8px;color:#2c2c2c;font-weight:normal;font-family:'Liberation Sans';transform:scaleX(0.948);text-shadow:none;">Tablet Tylenol</div>
<div class="t" style="left:498.50px;top:323.20px;font-size:5.8px;color:#2c2c2c;font-weight:normal;font-family:'Liberation Sans';transform:scaleX(0.930);text-shadow:none;">30</div>
<div class="t" style="left:553.70px;top:323.20px;font-size:5.8px;color:#2c2c2c;font-weight:normal;font-family:'Liberation Sans';transform:scaleX(0.876);text-shadow:none;">USD 27</div>
<div class="t" style="left:604.00px;top:323.20px;font-size:5.8px;color:#2c2c2c;font-weight:normal;font-family:'Liberation Sans';transform:scaleX(0.967);text-shadow:none;">strips</div>
<div class="t" style="left:644.80px;top:323.20px;font-size:5.8px;color:#2c2c2c;font-weight:normal;font-family:'Liberation Sans';transform:scaleX(0.850);text-shadow:none;">USD 810</div>
<div class="t" style="left:420.00px;top:335.60px;font-size:5.8px;color:#2c2c2c;font-weight:normal;font-family:'Liberation Sans';transform:scaleX(0.904);text-shadow:none;">Tablet Motrin</div>
<div class="t" style="left:498.50px;top:335.60px;font-size:5.8px;color:#2c2c2c;font-weight:normal;font-family:'Liberation Sans';transform:scaleX(0.930);text-shadow:none;">45</div>
<div class="t" style="left:553.70px;top:335.60px;font-size:5.8px;color:#2c2c2c;font-weight:normal;font-family:'Liberation Sans';transform:scaleX(0.876);text-shadow:none;">USD 14</div>
<div class="t" style="left:604.00px;top:335.60px;font-size:5.8px;color:#2c2c2c;font-weight:normal;font-family:'Liberation Sans';transform:scaleX(0.967);text-shadow:none;">strips</div>
<div class="t" style="left:644.80px;top:335.60px;font-size:5.8px;color:#2c2c2c;font-weight:normal;font-family:'Liberation Sans';transform:scaleX(0.850);text-shadow:none;">USD 630</div>
<div class="t" style="left:417.40px;top:347.80px;font-size:5.8px;color:#2c2c2c;font-weight:normal;font-family:'Liberation Sans';transform:scaleX(0.921);text-shadow:none;">Appendectomy</div>
<div class="t" style="left:500.50px;top:347.80px;font-size:5.8px;color:#2c2c2c;font-weight:normal;font-family:'Liberation Sans';transform:scaleX(0.618);text-shadow:none;">1</div>
<div class="t" style="left:547.00px;top:347.80px;font-size:5.8px;color:#2c2c2c;font-weight:normal;font-family:'Liberation Sans';transform:scaleX(0.862);text-shadow:none;">USD 135,000</div>
<div class="t" style="left:602.60px;top:347.80px;font-size:5.8px;color:#2c2c2c;font-weight:normal;font-family:'Liberation Sans';transform:scaleX(0.879);text-shadow:none;">surgery</div>
<div class="t" style="left:639.60px;top:347.80px;font-size:5.8px;color:#2c2c2c;font-weight:normal;font-family:'Liberation Sans';transform:scaleX(0.873);text-shadow:none;">USD 135,000</div>
<div class="t" style="left:434.00px;top:359.50px;font-size:5.8px;color:#2c2c2c;font-weight:normal;font-family:'Liberation Sans';transform:scaleX(0.775);text-shadow:none;">Tax</div>
<div class="t" style="left:650.70px;top:359.50px;font-size:5.8px;color:#2c2c2c;font-weight:normal;font-family:'Liberation Sans';transform:scaleX(0.820);text-shadow:none;">4 %</div>
<div class="t" style="left:429.00px;top:371.20px;font-size:5.8px;color:#222;font-weight:bold;font-family:'Liberation Sans';transform:scaleX(0.969);text-shadow:none;">Total</div>
<div class="t" style="left:636.70px;top:368.40px;font-size:5.8px;color:#222;font-weight:bold;font-family:'Liberation Sans';transform:scaleX(0.847);text-shadow:none;">USD 144,026.40</div>
<div class="a" style="left:590px;top:381px;width:87px;height:13px;background:#5fa2b3;"></div>
<div class="t" style="left:594.40px;top:384.29px;font-size:5.2px;color:#e8f4f6;font-weight:normal;font-family:'Liberation Sans';transform:scaleX(0.966);text-shadow:none;">AMOUNT DUE</div>
<div class="t" style="left:641.00px;top:384.15px;font-size:5.5px;color:#f2fafb;font-weight:bold;font-family:'Liberation Sans';transform:scaleX(0.899);text-shadow:none;">$144,026.40</div>
<div class="a" style="left:403px;top:421px;width:274px;height:1px;background:#bccfd3;"></div>
<div class="t" style="left:405.80px;top:427.91px;font-size:6px;color:#1e1e1e;font-weight:bold;font-family:'Liberation Sans';transform:scaleX(0.819);text-shadow:none;">Thank you for your purchase.</div>
<div class="a" style="left:403px;top:445px;width:274px;height:1px;background:#bccfd3;"></div>
<div class="t" style="left:405.80px;top:491.50px;font-size:5.8px;color:#555;font-weight:normal;font-family:'Liberation Sans';transform:scaleX(0.943);text-shadow:none;">Terms &amp; Conditions</div>
<div class="t" style="left:405.80px;top:498.70px;font-size:5.4px;color:#7a7a7a;font-weight:normal;font-family:'Liberation Sans';transform:scaleX(0.922);text-shadow:none;">• The above invoice must be paid at the hospital through cash, debit, or credit cards.</div>
<div class="t" style="left:405.80px;top:505.50px;font-size:5.4px;color:#7a7a7a;font-weight:normal;font-family:'Liberation Sans';transform:scaleX(0.922);text-shadow:none;">• Only credited insurance providers will be accepted.</div>
<div class="a" style="left:3px;top:62px;width:18px;height:16px;background:#383838;border-radius:1px"></div>
<svg class="a" style="left:5.5px;top:63.5px;" width="13.0" height="13.0" viewBox="0 0 13.0 13.0" fill="none"><g stroke="#dcdcdc" stroke-width="1.3"><line x1="6.5" y1="1.5" x2="6.5" y2="11.5"/><line x1="1.5" y1="6.5" x2="11.5" y2="6.5"/></g><g fill="#dcdcdc"><path d="M6.5 0 l-2 2.5 h4z"/><path d="M6.5 13.0 l-2 -2.5 h4z"/><path d="M0 6.5 l2.5 -2 v4z"/><path d="M13.0 6.5 l-2.5 -2 v4z"/></g></svg>
<svg class="a" style="left:18px;top:75px;" width="3" height="3" viewBox="0 0 3 3" fill="none"><path d="M3 0 V3 H0z" fill="#9a9a9a"/></svg>
<svg class="a" style="left:6px;top:82px;" width="12" height="11" viewBox="0 0 12 11" fill="none"><rect x="0.7" y="0.7" width="10.6" height="9.6" stroke="#dcdcdc" stroke-width="1.2" stroke-dasharray="2 1.3"/></svg>
<svg class="a" style="left:18px;top:91px;" width="3" height="3" viewBox="0 0 3 3" fill="none"><path d="M3 0 V3 H0z" fill="#9a9a9a"/></svg>
<svg class="a" style="left:6px;top:100px;" width="12" height="12" viewBox="0 0 12 12" fill="none"><path d="M1 3 L6 6 L11 1 L9 8 L4 11 L2 8 L6 6" stroke="#dcdcdc" stroke-width="1.3" stroke-linejoin="round"/></svg>
<svg class="a" style="left:18px;top:109px;" width="3" height="3" viewBox="0 0 3 3" fill="none"><path d="M3 0 V3 H0z" fill="#9a9a9a"/></svg>
<svg class="a" style="left:6px;top:118px;" width="12" height="12" viewBox="0 0 12 12" fill="none"><rect x="0.7" y="0.7" width="6" height="6" stroke="#dcdcdc" stroke-width="1.1"/><rect x="2.5" y="2.5" width="3" height="3" fill="#dcdcdc"/><path d="M5 5 L11 9 L8 9.5 L9.5 12 L7.5 11 L6 9z" fill="#dcdcdc"/></svg>
<svg class="a" style="left:18px;top:127px;" width="3" height="3" viewBox="0 0 3 3" fill="none"><path d="M3 0 V3 H0z" fill="#9a9a9a"/></svg>
<svg class="a" style="left:6px;top:135px;" width="12" height="13" viewBox="0 0 12 13" fill="none"><path d="M3 0 V10 H12 M0 3 H9 V13" stroke="#dcdcdc" stroke-width="1.4"/></svg>
<svg class="a" style="left:18px;top:145px;" width="3" height="3" viewBox="0 0 3 3" fill="none"><path d="M3 0 V3 H0z" fill="#9a9a9a"/></svg>
<svg class="a" style="left:6px;top:153px;" width="12" height="12" viewBox="0 0 12 12" fill="none"><rect x="0.7" y="0.7" width="10.6" height="10.6" stroke="#dcdcdc" stroke-width="1.2"/><path d="M1 1 L11 11 M11 1 L1 11" stroke="#dcdcdc" stroke-width="1"/></svg>
<svg class="a" style="left:18px;top:163px;" width="3" height="3" viewBox="0 0 3 3" fill="none"><path d="M3 0 V3 H0z" fill="#9a9a9a"/></svg>
<svg class="a" style="left:6px;top:171px;" width="12" height="12" viewBox="0 0 12 12" fill="none"><path d="M1.5 10.5 L6.5 5.5" stroke="#dcdcdc" stroke-width="2" stroke-linecap="round"/><path d="M6.5 5.5 L9.5 2.5" stroke="#dcdcdc" stroke-width="3.6" stroke-linecap="round"/><path d="M5 4 L8 7" stroke="#dcdcdc" stroke-width="1.2"/></svg>
<svg class="a" style="left:18px;top:181px;" width="3" height="3" viewBox="0 0 3 3" fill="none"><path d="M3 0 V3 H0z" fill="#9a9a9a"/></svg>
<svg class="a" style="left:5px;top:189px;" width="14" height="12" viewBox="0 0 14 12" fill="none"><path d="M2 9 L10 2" stroke="#dcdcdc" stroke-width="5" stroke-linecap="round"/><circle cx="6" cy="5.5" r="0.8" fill="#555"/></svg>
<svg class="a" style="left:18px;top:199px;" width="3" height="3" viewBox="0 0 3 3" fill="none"><path d="M3 0 V3 H0z" fill="#9a9a9a"/></svg>
<svg class="a" style="left:6px;top:207px;" width="12" height="12" viewBox="0 0 12 12" fill="none"><path d="M5 7 L11 1" stroke="#dcdcdc" stroke-width="1.5"/><path d="M1 11 C1 8 2.5 6.5 4.5 7 C5.5 8.5 4 11 1 11z" fill="#dcdcdc"/></svg>
<svg class="a" style="left:18px;top:217px;" width="3" height="3" viewBox="0 0 3 3" fill="none"><path d="M3 0 V3 H0z" fill="#9a9a9a"/></svg>
<svg class="a" style="left:6px;top:225px;" width="12" height="12" viewBox="0 0 12 12" fill="none"><circle cx="6" cy="3" r="2.4" fill="#dcdcdc"/><rect x="5" y="4" width="2" height="3.5" fill="#dcdcdc"/><rect x="1" y="7.2" width="10" height="2.8" fill="#dcdcdc"/><rect x="1" y="10.6" width="10" height="1" fill="#dcdcdc"/></svg>
<svg class="a" style="left:18px;top:235px;" width="3" height="3" viewBox="0 0 3 3" fill="none"><path d="M3 0 V3 H0z" fill="#9a9a9a"/></svg>
<svg class="a" style="left:5px;top:243px;" width="14" height="12" viewBox="0 0 14 12" fill="none"><path d="M6 7 L12 1" stroke="#dcdcdc" stroke-width="1.5"/><path d="M2 11 C2 8 3.5 6.5 5.5 7 C6.5 8.5 5 11 2 11z" fill="#dcdcdc"/><path d="M0 4 H5 M1 6 H4" stroke="#dcdcdc" stroke-width="1"/></svg>
<svg class="a" style="left:18px;top:253px;" width="3" height="3" viewBox="0 0 3 3" fill="none"><path d="M3 0 V3 H0z" fill="#9a9a9a"/></svg>
<svg class="a" style="left:6px;top:261px;" width="12" height="12" viewBox="0 0 12 12" fill="none"><path d="M2 8 L7 2 L11 5 L6 11 H2z" fill="#dcdcdc"/><path d="M1 11.5 H11" stroke="#dcdcdc" stroke-width="1"/></svg>
<svg class="a" style="left:18px;top:271px;" width="3" height="3" viewBox="0 0 3 3" fill="none"><path d="M3 0 V3 H0z" fill="#9a9a9a"/></svg>
<div class="a" style="left:7px;top:280px;width:11px;height:11px;background:linear-gradient(90deg,#2a2a2a,#e0e0e0);border:1px solid #ddd"></div>
<svg class="a" style="left:18px;top:289px;" width="3" height="3" viewBox="0 0 3 3" fill="none"><path d="M3 0 V3 H0z" fill="#9a9a9a"/></svg>
<svg class="a" style="left:7px;top:297px;" width="10" height="13" viewBox="0 0 10 13" fill="none"><path d="M5 0 C7 4 9.5 6 9.5 8.5 A4.5 4.5 0 0 1 0.5 8.5 C0.5 6 3 4 5 0z" fill="#dcdcdc"/></svg>
<svg class="a" style="left:18px;top:307px;" width="3" height="3" viewBox="0 0 3 3" fill="none"><path d="M3 0 V3 H0z" fill="#9a9a9a"/></svg>
<svg class="a" style="left:6px;top:315px;" width="12" height="13" viewBox="0 0 12 13" fill="none"><circle cx="7" cy="4.5" r="3.8" fill="#dcdcdc"/><path d="M5 7 L1 12" stroke="#dcdcdc" stroke-width="1.6"/></svg>
<svg class="a" style="left:18px;top:325px;" width="3" height="3" viewBox="0 0 3 3" fill="none"><path d="M3 0 V3 H0z" fill="#9a9a9a"/></svg>
<svg class="a" style="left:6px;top:334px;" width="12" height="12" viewBox="0 0 12 12" fill="none"><path d="M1 11 L3 5 L8 1 L11 4 L7 9 Z" stroke="#dcdcdc" stroke-width="1.2" stroke-linejoin="round"/><circle cx="5.5" cy="6.5" r="1" fill="#dcdcdc"/></svg>
<svg class="a" style="left:18px;top:344px;" width="3" height="3" viewBox="0 0 3 3" fill="none"><path d="M3 0 V3 H0z" fill="#9a9a9a"/></svg>
<div class="t" style="left:6.50px;top:352.73px;font-size:13px;color:#dcdcdc;font-weight:bold;font-family:'Liberation Serif';transform:scaleX(1.153);">T</div>
<svg class="a" style="left:18px;top:362px;" width="3" height="3" viewBox="0 0 3 3" fill="none"><path d="M3 0 V3 H0z" fill="#9a9a9a"/></svg>
<svg class="a" style="left:8px;top:370px;" width="10" height="13" viewBox="0 0 10 13" fill="none"><path d="M1 0 L9 8 L5 8 L6.5 12 L5 12.5 L3.5 8.5 L1 11z" fill="#dcdcdc"/></svg>
<svg class="a" style="left:18px;top:381px;" width="3" height="3" viewBox="0 0 3 3" fill="none"><path d="M3 0 V3 H0z" fill="#9a9a9a"/></svg>
<div class="a" style="left:6px;top:389px;width:12px;height:10px;background:transparent;border:1.3px solid #dcdcdc"></div>
<svg class="a" style="left:18px;top:398px;" width="3" height="3" viewBox="0 0 3 3" fill="none"><path d="M3 0 V3 H0z" fill="#9a9a9a"/></svg>
<svg class="a" style="left:6px;top:407px;" width="12" height="13" viewBox="0 0 12 13" fill="none"><path d="M3 12 C1 9 1 7 2 6 L4 8 V2 C4 1 5.5 1 5.5 2 V6 V1 C5.5 0 7 0 7 1 V6 V1.5 C7 0.5 8.5 0.5 8.5 1.5 V6.5 V3 C8.5 2 10 2 10 3 V8 C10 11 8 12 7 12z" fill="#dcdcdc"/></svg>
<svg class="a" style="left:18px;top:417px;" width="3" height="3" viewBox="0 0 3 3" fill="none"><path d="M3 0 V3 H0z" fill="#9a9a9a"/></svg>
<svg class="a" style="left:6px;top:424px;" width="12" height="13" viewBox="0 0 12 13" fill="none"><circle cx="7" cy="5" r="3.8" stroke="#dcdcdc" stroke-width="1.5"/><path d="M4.3 7.8 L0.8 11.5" stroke="#dcdcdc" stroke-width="2"/></svg>
<svg class="a" style="left:18px;top:434px;" width="3" height="3" viewBox="0 0 3 3" fill="none"><path d="M3 0 V3 H0z" fill="#9a9a9a"/></svg>
<div class="a" style="left:7px;top:448.5px;width:2.4px;height:2.4px;background:#dcdcdc;border-radius:50%"></div>
<div class="a" style="left:11px;top:448.5px;width:2.4px;height:2.4px;background:#dcdcdc;border-radius:50%"></div>
<div class="a" style="left:15px;top:448.5px;width:2.4px;height:2.4px;background:#dcdcdc;border-radius:50%"></div>
<div class="a" style="left:4px;top:457px;width:5px;height:5px;background:#111;border:1px solid #ddd"></div>
<div class="a" style="left:6.5px;top:459.5px;width:5px;height:5px;background:#fafafa;border:1px solid #222"></div>
<svg class="a" style="left:14px;top:455px;" width="8" height="9" viewBox="0 0 8 9" fill="none"><path d="M1 3 H6 V8" stroke="#dcdcdc" stroke-width="1"/><path d="M0 3 l2-2 v4z M6 9 l-2-2 h4z" fill="#dcdcdc"/></svg>
<div class="a" style="left:9.5px;top:481px;width:11.5px;height:12.5px;background:#f8f8f8;border:1px solid #2a2a2a"></div>
<div class="a" style="left:3px;top:473.5px;width:11.5px;height:12.5px;background:#ffffff;border:1px solid #333"></div>
<svg class="a" style="left:6px;top:500px;" width="12" height="11" viewBox="0 0 12 11" fill="none"><rect x="0.6" y="0.6" width="10.8" height="9.8" rx="1" stroke="#dcdcdc" stroke-width="1.1"/><circle cx="6" cy="5.5" r="2.8" stroke="#dcdcdc" stroke-width="1"/></svg>
<svg class="a" style="left:6px;top:518px;" width="12" height="12" viewBox="0 0 12 12" fill="none"><rect x="3.6" y="0.6" width="7.8" height="6.8" stroke="#dcdcdc" stroke-width="1.1"/><rect x="0.6" y="4" width="7.8" height="6.8" fill="#494949" stroke="#dcdcdc" stroke-width="1.1"/></svg>
<svg class="a" style="left:18px;top:528px;" width="3" height="3" viewBox="0 0 3 3" fill="none"><path d="M3 0 V3 H0z" fill="#9a9a9a"/></svg>
<div class="a" style="left:869px;top:49px;width:2px;height:671px;background:#3b3b3b;"></div>
<div class="a" style="left:895px;top:49px;width:1px;height:671px;background:#3b3b3b;"></div>
<div class="a" style="left:871px;top:49px;width:24px;height:154px;background:#535353;"></div>
<div class="t" style="left:885.00px;top:40.64px;font-size:8px;color:#bdbdbd;font-weight:normal;font-family:'Liberation Sans';transform:scaleX(1.347);">«</div>
<div class="t" style="left:1065.50px;top:40.64px;font-size:8px;color:#bdbdbd;font-weight:normal;font-family:'Liberation Sans';transform:scaleX(1.347);">»</div>
<div class="a" style="left:871px;top:98px;width:24px;height:1px;background:#3f3f3f;"></div>
<div class="a" style="left:871px;top:146px;width:24px;height:1px;background:#3f3f3f;"></div>
<div class="a" style="left:871px;top:174px;width:24px;height:1px;background:#3f3f3f;"></div>
<div class="a" style="left:871px;top:202px;width:24px;height:1px;background:#3f3f3f;"></div>
<svg class="a" style="left:876px;top:58px;" width="14" height="13" viewBox="0 0 14 13" fill="none"><path d="M0.5 1 H5 M0.5 3.5 H4 M0.5 6 H4" stroke="#d6d6d6" stroke-width="1"/><path d="M0.5 0 V7" stroke="#d6d6d6" stroke-width="1"/><path d="M7 7.5 L13 1.5" stroke="#d6d6d6" stroke-width="1.8"/><path d="M3 12.5 C3 9.5 4.5 8 6.5 8.3 C8 9.5 6.5 12.5 3 12.5z" fill="#d6d6d6"/></svg>
<svg class="a" style="left:876px;top:78px;" width="14" height="13" viewBox="0 0 14 13" fill="none"><circle cx="4" cy="3" r="2.5" fill="#d6d6d6"/><path d="M6 3 H13" stroke="#d6d6d6" stroke-width="1.2"/><path d="M0.5 9 H7" stroke="#d6d6d6" stroke-width="1.2"/><path d="M13 6 L8 9 L13 12z" fill="#d6d6d6"/><circle cx="10" cy="9" r="2.5" fill="#d6d6d6"/></svg>
<div class="t" style="left:877.00px;top:106.70px;font-size:11px;color:#d6d6d6;font-weight:normal;font-family:'Liberation Sans';transform:scaleX(1.078);">A|</div>
<div class="t" style="left:879.00px;top:126.22px;font-size:12px;color:#d6d6d6;font-weight:bold;font-family:'Liberation Sans';transform:scaleX(1.196);">¶</div>
<div class="t" style="left:878.00px;top:154.72px;font-size:12px;color:#d6d6d6;font-weight:normal;font-family:'Liberation Serif';transform:scaleX(1.038);font-style:italic">A</div>
<svg class="a" style="left:877px;top:182px;" width="12" height="13" viewBox="0 0 12 13" fill="none"><path d="M6 0.7 L11.3 3.5 V9.5 L6 12.3 L0.7 9.5 V3.5z" stroke="#d6d6d6" stroke-width="1.2"/><path d="M0.7 3.5 L6 6.3 L11.3 3.5 M6 6.3 V12.3" stroke="#d6d6d6" stroke-width="1"/></svg>
<div class="a" style="left:896px;top:49px;width:178px;height:20px;background:#454545;"></div>
<div class="t" style="left:901.00px;top:54.64px;font-size:8px;color:#bdbdbd;font-weight:normal;font-family:'Liberation Sans';transform:scaleX(0.780);">Swatc</div>
<div class="a" style="left:921px;top:51px;width:1px;height:17px;background:#414141;"></div>
<div class="t" style="left:924.40px;top:54.64px;font-size:8px;color:#bdbdbd;font-weight:normal;font-family:'Liberation Sans';transform:scaleX(0.818);">Gradi</div>
<div class="a" style="left:943px;top:51px;width:1px;height:17px;background:#414141;"></div>
<div class="t" style="left:946.70px;top:54.64px;font-size:8px;color:#bdbdbd;font-weight:normal;font-family:'Liberation Sans';transform:scaleX(0.811);">Patter</div>
<div class="a" style="left:967px;top:51px;width:1px;height:17px;background:#414141;"></div>
<div class="t" style="left:969.60px;top:54.64px;font-size:8px;color:#bdbdbd;font-weight:normal;font-family:'Liberation Sans';transform:scaleX(0.899);">Histo</div>
<div class="a" style="left:989px;top:51px;width:1px;height:17px;background:#414141;"></div>
<div class="t" style="left:991.80px;top:54.64px;font-size:8px;color:#bdbdbd;font-weight:normal;font-family:'Liberation Sans';transform:scaleX(0.933);">Actio</div>
<div class="a" style="left:1011px;top:51px;width:1px;height:17px;background:#414141;"></div>
<div class="a" style="left:1009px;top:49px;width:40px;height:20px;background:#535353;"></div>
<div class="t" style="left:1014.40px;top:54.64px;font-size:8px;color:#f0f0f0;font-weight:bold;font-family:'Liberation Sans';transform:scaleX(0.771);">Properties</div>
<div class="a" style="left:1050px;top:49px;width:24px;height:20px;background:#434343;"></div>
<div class="a" style="left:1064.5px;top:56.0px;width:8px;height:1.3px;background:#a8a8a8;"></div>
<div class="a" style="left:1064.5px;top:58.3px;width:8px;height:1.3px;background:#a8a8a8;"></div>
<div class="a" style="left:1064.5px;top:60.6px;width:8px;height:1.3px;background:#a8a8a8;"></div>
<div class="a" style="left:1074px;top:49px;width:6px;height:671px;background:#434343;"></div>
<div class="a" style="left:903px;top:73px;width:13px;height:15px;background:#383838;"></div>
<svg class="a" style="left:905.5px;top:75.5px;" width="8" height="10" viewBox="0 0 8 10" fill="none"><path d="M0.6 0.6 H5 L7.4 3 V9.4 H0.6z" stroke="#d6d6d6" stroke-width="1.1"/></svg>
<div class="t" style="left:920.00px;top:77.64px;font-size:8px;color:#e0e0e0;font-weight:normal;font-family:'Liberation Sans';transform:scaleX(0.795);">Document</div>
<div class="a" style="left:896px;top:92px;width:178px;height:1px;background:#474747;"></div>
<svg class="a" style="left:900px;top:100px;" width="5" height="4" viewBox="0 0 5 4" fill="none"><path d="M0.5 0.5 L2.5 3 L4.5 0.5" stroke="#9a9a9a" stroke-width="0.9"/></svg>
<div class="t" style="left:909.80px;top:98.64px;font-size:8px;color:#eaeaea;font-weight:bold;font-family:'Liberation Sans';transform:scaleX(0.811);">Canvas</div>
<div class="a" style="left:1066px;top:95px;width:8px;height:272px;background:#4a4a4a;"></div>
<div class="a" style="left:1067px;top:106px;width:6px;height:222px;background:#5e5e5e;"></div>
<svg class="a" style="left:1067px;top:98px;" width="6" height="4" viewBox="0 0 6 4" fill="none"><path d="M0.5 3.5 L3 1 L5.5 3.5" stroke="#888" stroke-width="0.9"/></svg>
<svg class="a" style="left:1067px;top:357px;" width="6" height="4" viewBox="0 0 6 4" fill="none"><path d="M0.5 0.5 L3 3 L5.5 0.5" stroke="#888" stroke-width="0.9"/></svg>
<div class="t" style="left:928.30px;top:116.39px;font-size:7.5px;color:#bdbdbd;font-weight:normal;font-family:'Liberation Sans';transform:scaleX(0.846);">W</div>
<div class="a" style="left:938.5px;top:115px;width:31.3px;height:9.5px;background:#464646;"></div>
<div class="t" style="left:940.40px;top:116.19px;font-size:7.5px;color:#e0e0e0;font-weight:normal;font-family:'Liberation Sans';transform:scaleX(0.824);">2232 px</div>
<div class="t" style="left:979.80px;top:116.39px;font-size:7.5px;color:#b5b5b5;font-weight:normal;font-family:'Liberation Sans';transform:scaleX(0.897);">X</div>
<div class="a" style="left:989px;top:115px;width:32px;height:10px;background:#4e4e4e;"></div>
<div class="t" style="left:991.00px;top:116.63px;font-size:7px;color:#6a6a6a;font-weight:normal;font-family:'Liberation Sans';transform:scaleX(0.907);">0 px</div>
<div class="t" style="left:928.30px;top:133.88px;font-size:7.5px;color:#bdbdbd;font-weight:normal;font-family:'Liberation Sans';transform:scaleX(1.014);">H</div>
<div class="a" style="left:938.5px;top:132.3px;width:31.3px;height:9.5px;background:#464646;"></div>
<div class="t" style="left:940.40px;top:133.58px;font-size:7.5px;color:#e0e0e0;font-weight:normal;font-family:'Liberation Sans';transform:scaleX(0.824);">2854 px</div>
<div class="t" style="left:979.80px;top:133.88px;font-size:7.5px;color:#b5b5b5;font-weight:normal;font-family:'Liberation Sans';transform:scaleX(0.897);">Y</div>
<div class="a" style="left:989px;top:132.3px;width:32px;height:10px;background:#4e4e4e;"></div>
<div class="t" style="left:991.00px;top:133.93px;font-size:7px;color:#6a6a6a;font-weight:normal;font-family:'Liberation Sans';transform:scaleX(0.907);">0 px</div>
<svg class="a" style="left:906px;top:123px;" width="8" height="11" viewBox="0 0 8 11" fill="none"><rect x="1" y="0.6" width="5" height="4.6" rx="2.3" stroke="#d6d6d6" stroke-width="1.1"/><rect x="1" y="5.6" width="5" height="4.6" rx="2.3" stroke="#d6d6d6" stroke-width="1.1"/></svg>
<div class="a" style="left:938.5px;top:151.3px;width:14.5px;height:16.2px;background:#393939;"></div>
<svg class="a" style="left:941px;top:154px;" width="10" height="11" viewBox="0 0 10 11" fill="none"><rect x="0.6" y="0.6" width="8.8" height="10" stroke="#d6d6d6" stroke-width="0.9"/><circle cx="5" cy="3.5" r="1.3" fill="#d6d6d6"/><rect x="3" y="5.5" width="4" height="5" fill="#d6d6d6"/></svg>
<svg class="a" style="left:956.6px;top:155px;" width="11.3" height="9" viewBox="0 0 11.3 9" fill="none"><rect x="0.5" y="0.5" width="10.3" height="8" stroke="#d6d6d6" stroke-width="0.9"/><circle cx="5.6" cy="3.2" r="1.2" fill="#d6d6d6"/><rect x="3.6" y="4.8" width="4" height="3.7" fill="#d6d6d6"/></svg>
<div class="t" style="left:938.50px;top:176.38px;font-size:7.5px;color:#cfcfcf;font-weight:normal;font-family:'Liberation Sans';transform:scaleX(0.827);">Resolution: 250 pixels/inch</div>
<div class="t" style="left:918.80px;top:193.64px;font-size:8px;color:#c6c6c6;font-weight:normal;font-family:'Liberation Sans';transform:scaleX(0.749);">Mode</div>
<div class="a" style="left:939.5px;top:192.5px;width:81.0px;height:12.0px;background:#474747;"></div>
<div class="t" style="left:944.00px;top:194.64px;font-size:8px;color:#d6d6d6;font-weight:normal;font-family:'Liberation Sans';transform:scaleX(0.698);">RGB Color</div>
<svg class="a" style="left:1013.5px;top:197.0px;" width="5" height="3" viewBox="0 0 5 3" fill="none"><path d="M0.5 0.5 L2.5 2.5 L4.5 0.5" stroke="#a0a0a0" stroke-width="0.9"/></svg>
<div class="a" style="left:939.5px;top:210px;width:81.0px;height:12.5px;background:#474747;"></div>
<div class="t" style="left:944.00px;top:212.39px;font-size:8px;color:#d6d6d6;font-weight:normal;font-family:'Liberation Sans';transform:scaleX(0.876);">16 Bits/Channel</div>
<svg class="a" style="left:1013.5px;top:214.75px;" width="5" height="3" viewBox="0 0 5 3" fill="none"><path d="M0.5 0.5 L2.5 2.5 L4.5 0.5" stroke="#a0a0a0" stroke-width="0.9"/></svg>
<div class="t" style="left:925.50px;top:230.64px;font-size:8px;color:#c6c6c6;font-weight:normal;font-family:'Liberation Sans';transform:scaleX(0.783);">Fill</div>
<div class="a" style="left:938.8px;top:227.5px;width:10.7px;height:13px;background:#4c4c4c;border:1px solid #3d3d3d"></div>
<div class="a" style="left:953px;top:227.5px;width:67.5px;height:13.0px;background:#474747;"></div>
<div class="t" style="left:957.50px;top:230.14px;font-size:8px;color:#d6d6d6;font-weight:normal;font-family:'Liberation Sans';transform:scaleX(0.817);">Transparent</div>
<svg class="a" style="left:1013.5px;top:232.5px;" width="5" height="3" viewBox="0 0 5 3" fill="none"><path d="M0.5 0.5 L2.5 2.5 L4.5 0.5" stroke="#a0a0a0" stroke-width="0.9"/></svg>
<div class="a" style="left:896px;top:247px;width:170px;height:1px;background:#474747;"></div>
<svg class="a" style="left:900px;top:255px;" width="5" height="4" viewBox="0 0 5 4" fill="none"><path d="M0.5 0.5 L2.5 3 L4.5 0.5" stroke="#9a9a9a" stroke-width="0.9"/></svg>
<div class="t" style="left:911.00px;top:253.64px;font-size:8px;color:#eaeaea;font-weight:bold;font-family:'Liberation Sans';transform:scaleX(0.785);">Rulers &amp; Grids</div>
<div class="a" style="left:903px;top:270.5px;width:15px;height:15.5px;background:#393939;"></div>
<svg class="a" style="left:906px;top:273px;" width="10" height="10" viewBox="0 0 10 10" fill="none"><path d="M1 10 V1 H10" stroke="#d6d6d6" stroke-width="2"/></svg>
<svg class="a" style="left:925.5px;top:272.5px;" width="11.5" height="12" viewBox="0 0 11.5 12" fill="none"><rect x="0.5" y="0.5" width="10.5" height="11" stroke="#d6d6d6" stroke-width="0.9"/><path d="M4 0.5 V11.5 M7.5 0.5 V11.5 M0.5 4.2 H11 M0.5 7.8 H11" stroke="#d6d6d6" stroke-width="0.8"/></svg>
<svg class="a" style="left:946px;top:272.5px;" width="11.5" height="12" viewBox="0 0 11.5 12" fill="none"><rect x="0.5" y="0.5" width="10.5" height="11" stroke="#aaa" stroke-width="0.9"/><rect x="2.5" y="2.5" width="6.5" height="7" stroke="#888" stroke-width="0.8" stroke-dasharray="1 1"/></svg>
<div class="a" style="left:975px;top:272.5px;width:45.5px;height:12.5px;background:#474747;"></div>
<div class="t" style="left:979.50px;top:274.94px;font-size:8px;color:#d6d6d6;font-weight:normal;font-family:'Liberation Sans';transform:scaleX(0.726);">Pixels</div>
<svg class="a" style="left:1013.5px;top:277.3px;" width="5" height="3" viewBox="0 0 5 3" fill="none"><path d="M0.5 0.5 L2.5 2.5 L4.5 0.5" stroke="#a0a0a0" stroke-width="0.9"/></svg>
<div class="a" style="left:896px;top:293.5px;width:170px;height:1px;background:#474747;"></div>
<svg class="a" style="left:900px;top:303px;" width="5" height="4" viewBox="0 0 5 4" fill="none"><path d="M0.5 0.5 L2.5 3 L4.5 0.5" stroke="#9a9a9a" stroke-width="0.9"/></svg>
<div class="t" style="left:911.00px;top:301.64px;font-size:8px;color:#eaeaea;font-weight:bold;font-family:'Liberation Sans';transform:scaleX(0.811);">Guides</div>
<div class="a" style="left:903px;top:316px;width:15px;height:17.7px;background:#393939;"></div>
<svg class="a" style="left:905px;top:319px;" width="11" height="12" viewBox="0 0 11 12" fill="none"><path d="M3 0 V12 M0 4 H11 M0 8 H11" stroke="#d6d6d6" stroke-width="1"/></svg>
<svg class="a" style="left:925.5px;top:318px;" width="12" height="14" viewBox="0 0 12 14" fill="none"><path d="M3 0 V12 M6 0 V12 M0 4 H9 M0 8 H9" stroke="#d6d6d6" stroke-width="0.9"/><rect x="7" y="9" width="5" height="4" fill="#d6d6d6"/></svg>
<div class="a" style="left:944.5px;top:316px;width:14.2px;height:17.7px;background:#393939;"></div>
<svg class="a" style="left:946.5px;top:318.5px;" width="11" height="13" viewBox="0 0 11 13" fill="none"><path d="M3 0 V12 M0 4 H6" stroke="#d6d6d6" stroke-width="1"/><path d="M6 3 L10 6 L6 9z" fill="#d6d6d6"/><path d="M8 8 V12" stroke="#d6d6d6" stroke-width="1.5"/></svg>
<div class="a" style="left:975px;top:319.5px;width:45.5px;height:13.5px;background:#474747;"></div>
<div class="a" style="left:979px;top:325.7px;width:27px;height:1.6px;background:#d0d0d0;"></div>
<svg class="a" style="left:1013.5px;top:325px;" width="5" height="3" viewBox="0 0 5 3" fill="none"><path d="M0.5 0.5 L2.5 2.5 L4.5 0.5" stroke="#a0a0a0" stroke-width="0.9"/></svg>
<div class="a" style="left:896px;top:341px;width:170px;height:1px;background:#474747;"></div>
<svg class="a" style="left:900px;top:350px;" width="5" height="4" viewBox="0 0 5 4" fill="none"><path d="M0.5 0.5 L2.5 3 L4.5 0.5" stroke="#9a9a9a" stroke-width="0.9"/></svg>
<div class="t" style="left:911.00px;top:348.64px;font-size:8px;color:#eaeaea;font-weight:bold;font-family:'Liberation Sans';transform:scaleX(0.785);">Quick Actions</div>
<svg class="a" style="left:0;top:0;z-index:1" width="1080" height="720" viewBox="0 0 1080 720"><path d="M871.7 667.0500000000001 H859.25 V696.05 H871.7 M859.25 681.3 H870.9000000000001 M878.1500000000001 665.6 V697.5 M892.8 665.6 L879.5 683.3 M883.8 679.5 L893.9 697.7 M937.98 669.25 A8.65 14.50 0 1 0 941.04 688.36 V682.3 H935.9 M962.2 667.0500000000001 H949.25 V696.05 H962.2 M949.25 681.3 H961.4000000000001 M967.4 697.8 L977.2 665.3000000000001 L986.1 697.8 M970.8 685.5 H983" stroke="#1d1d1d" stroke-width="2.9" fill="none"/><ellipse cx="907.6" cy="681.55" rx="9.650000000000023" ry="14.49999999999999" stroke="#1d1d1d" stroke-width="2.9" fill="none"/><rect x="991.7" y="693.8" width="3.6" height="3.7" fill="#1d1d1d"/><path d="M1028.65 697.5 V667.0500000000001 H1035 C1040.75 667.0500000000001 1040.75 681.3499999999999 1035 681.3499999999999 H1028.65 M1034.5 681.3499999999999 L1043.6 697.5 M1062.71 669.25 A8.80 14.50 0 1 0 1065.82 688.36 V682.3 H1060" stroke="#7a9e22" stroke-width="2.9" fill="none"/><ellipse cx="1010.0" cy="681.55" rx="10.250000000000046" ry="14.49999999999999" stroke="#7a9e22" stroke-width="2.9" fill="none"/></svg>
<div class="a" style="left:896px;top:385px;width:178px;height:22px;background:#414141;"></div>
<div class="a" style="left:896px;top:386px;width:30px;height:21px;background:#4f4f4f;"></div>
<div class="t" style="left:901.40px;top:392.74px;font-size:8px;color:#ececec;font-weight:bold;font-family:'Liberation Sans';transform:scaleX(0.737);">Layers</div>
<div class="a" style="left:1065.5px;top:394.0px;width:7px;height:1.3px;background:#b0b0b0;"></div>
<div class="a" style="left:1065.5px;top:396.3px;width:7px;height:1.3px;background:#b0b0b0;"></div>
<div class="a" style="left:1065.5px;top:398.6px;width:7px;height:1.3px;background:#b0b0b0;"></div>
<div class="a" style="left:899.7px;top:412.8px;width:52px;height:13.2px;background:#3f3f3f;"></div>
<svg class="a" style="left:902.5px;top:415.5px;" width="7" height="8" viewBox="0 0 7 8" fill="none"><circle cx="3" cy="3" r="2.2" stroke="#dcdcdc" stroke-width="1.2"/><path d="M4.6 4.6 L6.8 7" stroke="#dcdcdc" stroke-width="1.4"/></svg>
<div class="t" style="left:912.00px;top:415.88px;font-size:7.5px;color:#d8d8d8;font-weight:normal;font-family:'Liberation Sans';transform:scaleX(0.866);">Kind</div>
<svg class="a" style="left:944px;top:417.5px;" width="6" height="4" viewBox="0 0 6 4" fill="none"><path d="M0.5 0.5 L3 3 L5.5 0.5" stroke="#a0a0a0" stroke-width="1"/></svg>
<svg class="a" style="left:958px;top:415px;" width="10" height="9" viewBox="0 0 10 9" fill="none"><rect x="0.5" y="0.5" width="9" height="8" stroke="#d0d0d0" stroke-width="1"/><path d="M1.5 7.5 L4 4.5 L6 6.5 L7.5 5 L9 7.5z" fill="#d0d0d0"/></svg>
<svg class="a" style="left:974.5px;top:415px;" width="9" height="9" viewBox="0 0 9 9" fill="none"><circle cx="4.5" cy="4.5" r="4" fill="#d0d0d0"/><path d="M7.3 1.7 L1.7 7.3 A4 4 0 0 0 7.3 7.3z" fill="#535353"/></svg>
<div class="t" style="left:989.50px;top:415.18px;font-size:10px;color:#d0d0d0;font-weight:bold;font-family:'Liberation Serif';transform:scaleX(1.199);">T</div>
<svg class="a" style="left:1004px;top:415px;" width="10" height="10" viewBox="0 0 10 10" fill="none"><rect x="1.5" y="1.5" width="7" height="7" stroke="#d0d0d0" stroke-width="1"/><g fill="#d0d0d0"><rect x="0" y="0" width="3" height="3"/><rect x="7" y="0" width="3" height="3"/><rect x="0" y="7" width="3" height="3"/><rect x="7" y="7" width="3" height="3"/></g></svg>
<svg class="a" style="left:1020px;top:414px;" width="9" height="11" viewBox="0 0 9 11" fill="none"><path d="M0.5 0.5 H6 L8.5 3 V10.5 H0.5z" stroke="#d0d0d0" stroke-width="1"/><rect x="1" y="5" width="5" height="5.5" fill="#d0d0d0"/></svg>
<svg class="a" style="left:1034px;top:410.5px;" width="8" height="13" viewBox="0 0 8 13" fill="none"><circle cx="4" cy="4" r="3.6" fill="#e6e6e6"/><rect x="3" y="7" width="2" height="4" fill="#777"/></svg>
<div class="a" style="left:896px;top:427.5px;width:178px;height:1px;background:#4a4a4a;"></div>
<div class="a" style="left:901.4px;top:433px;width:76.6px;height:12.3px;background:#4d4d4d;border:1px solid #4a4a4a"></div>
<div class="t" style="left:905.00px;top:435.58px;font-size:7.5px;color:#6c6c6c;font-weight:normal;font-family:'Liberation Sans';transform:scaleX(0.827);">Normal</div>
<div class="t" style="left:982.40px;top:435.88px;font-size:7.5px;color:#6e6e6e;font-weight:normal;font-family:'Liberation Sans';transform:scaleX(0.829);">Opacity:</div>
<div class="a" style="left:1009.6px;top:433.5px;width:20.3px;height:11px;background:#484848;"></div>
<div class="t" style="left:1011.50px;top:435.93px;font-size:7px;color:#666;font-weight:normal;font-family:'Liberation Sans';transform:scaleX(0.782);">100%</div>
<div class="a" style="left:1031px;top:433.5px;width:9px;height:11px;background:#4d4d4d;"></div>
<div class="a" style="left:896px;top:448px;width:178px;height:1px;background:#4a4a4a;"></div>
<div class="t" style="left:899.70px;top:455.78px;font-size:7.5px;color:#6e6e6e;font-weight:normal;font-family:'Liberation Sans';transform:scaleX(0.836);">Lock:</div>
<svg class="a" style="left:919.5px;top:454px;" width="8" height="10" viewBox="0 0 8 10" fill="none"><g fill="#7a7a7a"><rect x="0" y="0" width="2.6" height="2.6"/><rect x="5.2" y="0" width="2.6" height="2.6"/><rect x="2.6" y="2.6" width="2.6" height="2.6"/><rect x="0" y="5.2" width="2.6" height="2.6"/><rect x="5.2" y="5.2" width="2.6" height="2.6"/><rect x="2.6" y="7.8" width="2.6" height="2.2"/></g></svg>
<svg class="a" style="left:933px;top:454px;" width="9" height="11" viewBox="0 0 9 11" fill="none"><path d="M8 0.5 L3 7" stroke="#7a7a7a" stroke-width="1.4"/><path d="M0.5 10.5 C0.5 8 1.5 7 3.2 7.3 C4 8.5 3 10.5 0.5 10.5z" fill="#7a7a7a"/></svg>
<svg class="a" style="left:945.7px;top:453.9px;" width="11.0" height="11.0" viewBox="0 0 11.0 11.0" fill="none"><g stroke="#7a7a7a" stroke-width="1"><line x1="5.5" y1="1.5" x2="5.5" y2="9.5"/><line x1="1.5" y1="5.5" x2="9.5" y2="5.5"/></g><g fill="#7a7a7a"><path d="M5.5 0 l-2 2.5 h4z"/><path d="M5.5 11.0 l-2 -2.5 h4z"/><path d="M0 5.5 l2.5 -2 v4z"/><path d="M11.0 5.5 l-2.5 -2 v4z"/></g></svg>
<svg class="a" style="left:960.5px;top:454px;" width="10" height="10" viewBox="0 0 10 10" fill="none"><path d="M2 0 V8 H10 M0 2 H8 V10" stroke="#7a7a7a" stroke-width="1"/></svg>
<svg class="a" style="left:974.8px;top:453.5px;" width="8" height="11" viewBox="0 0 8 11" fill="none"><path d="M1.8 5 V3.2 A2.2 2.2 0 0 1 6.2 3.2 V5" stroke="#7a7a7a" stroke-width="1.2"/><rect x="0.5" y="5" width="7" height="5.5" fill="#7a7a7a"/></svg>
<div class="t" style="left:996.40px;top:455.78px;font-size:7.5px;color:#6e6e6e;font-weight:normal;font-family:'Liberation Sans';transform:scaleX(0.771);">Fill:</div>
<div class="a" style="left:1009.6px;top:453.5px;width:20.3px;height:11px;background:#484848;"></div>
<div class="t" style="left:1011.50px;top:455.93px;font-size:7px;color:#666;font-weight:normal;font-family:'Liberation Sans';transform:scaleX(0.782);">100%</div>
<div class="a" style="left:1031px;top:453.5px;width:9px;height:11px;background:#4d4d4d;"></div>
<div class="a" style="left:896px;top:467px;width:170px;height:1px;background:#4a4a4a;"></div>
<div class="a" style="left:914px;top:468px;width:1px;height:238px;background:#4c4c4c;"></div>
<div class="a" style="left:896px;top:486px;width:170px;height:1px;background:#484848;"></div>
<div class="a" style="left:896px;top:516px;width:170px;height:1px;background:#484848;"></div>
<div class="a" style="left:896px;top:544px;width:170px;height:1px;background:#484848;"></div>
<div class="a" style="left:896px;top:572px;width:170px;height:1px;background:#484848;"></div>
<div class="a" style="left:896px;top:600px;width:170px;height:1px;background:#484848;"></div>
<div class="a" style="left:896px;top:628px;width:170px;height:1px;background:#484848;"></div>
<div class="a" style="left:896px;top:657px;width:170px;height:1px;background:#484848;"></div>
<div class="a" style="left:896px;top:686px;width:170px;height:1px;background:#484848;"></div>
<svg class="a" style="left:900.6px;top:475.1px;" width="10" height="7" viewBox="0 0 10 7" fill="none"><path d="M0.5 3.5 Q5 -1.5 9.5 3.5 Q5 8.5 0.5 3.5z" stroke="#a8a8a8" stroke-width="1"/><circle cx="5" cy="3.5" r="1.6" fill="#a8a8a8"/></svg>
<svg class="a" style="left:927.5px;top:476px;" width="5" height="4" viewBox="0 0 5 4" fill="none"><path d="M0.5 0.5 L2.5 3 L4.5 0.5" stroke="#9a9a9a" stroke-width="0.9"/></svg>
<svg class="a" style="left:935px;top:473.5px;" width="9" height="8.5" viewBox="0 0 9 8.5" fill="none"><path d="M0 1 H3.5 L4.5 2 H9 V8.5 H0z" fill="#dadada"/><path d="M0 3 H9" stroke="#535353" stroke-width="0.8"/></svg>
<div class="t" style="left:951.30px;top:474.99px;font-size:7.5px;color:#d8d8d8;font-weight:normal;font-family:'Liberation Sans';transform:scaleX(0.828);">edite text</div>
<svg class="a" style="left:900.6px;top:497.5px;" width="10" height="7" viewBox="0 0 10 7" fill="none"><path d="M0.5 3.5 Q5 -1.5 9.5 3.5 Q5 8.5 0.5 3.5z" stroke="#a8a8a8" stroke-width="1"/><circle cx="5" cy="3.5" r="1.6" fill="#a8a8a8"/></svg>
<div class="t" style="left:942.30px;top:494.73px;font-size:13px;color:#dedede;font-weight:normal;font-family:'Liberation Serif';transform:scaleX(1.257);">T</div>
<div class="t" style="left:962.90px;top:497.38px;font-size:7.5px;color:#dadada;font-weight:normal;font-family:'Liberation Sans';transform:scaleX(0.815);">Layer 2</div>
<svg class="a" style="left:900.6px;top:526.7px;" width="10" height="7" viewBox="0 0 10 7" fill="none"><path d="M0.5 3.5 Q5 -1.5 9.5 3.5 Q5 8.5 0.5 3.5z" stroke="#a8a8a8" stroke-width="1"/><circle cx="5" cy="3.5" r="1.6" fill="#a8a8a8"/></svg>
<div class="a" style="left:937.6px;top:519px;width:15.6px;height:21px;background:#fff;background:conic-gradient(#d4d4d4 0 25%,#fff 0 50%,#d4d4d4 0 75%,#fff 0) 0 0/5px 5px;border:1px solid #3a3a3a"></div>
<div class="a" style="left:939.5px;top:521px;width:3px;height:3px;background:#a04848;"></div>
<div class="t" style="left:959.00px;top:526.59px;font-size:7.5px;color:#dadada;font-weight:normal;font-family:'Liberation Sans';transform:scaleX(0.819);">Layer 3</div>
<svg class="a" style="left:900.6px;top:555.2px;" width="10" height="7" viewBox="0 0 10 7" fill="none"><path d="M0.5 3.5 Q5 -1.5 9.5 3.5 Q5 8.5 0.5 3.5z" stroke="#a8a8a8" stroke-width="1"/><circle cx="5" cy="3.5" r="1.6" fill="#a8a8a8"/></svg>
<div class="t" style="left:942.30px;top:552.43px;font-size:13px;color:#dedede;font-weight:normal;font-family:'Liberation Serif';transform:scaleX(1.257);">T</div>
<div class="t" style="left:962.90px;top:555.09px;font-size:7.5px;color:#dadada;font-weight:normal;font-family:'Liberation Sans';transform:scaleX(0.853);">cita0000000...&lt;&lt;&lt;&lt;&lt;&lt;&lt;&lt;&lt;0 d</div>
<div class="a" style="left:903px;top:583.1px;width:5px;height:8px;background:transparent;border:1px solid #5e5e5e"></div>
<div class="t" style="left:942.30px;top:580.83px;font-size:13px;color:#dedede;font-weight:normal;font-family:'Liberation Serif';transform:scaleX(1.257);">T</div>
<div class="t" style="left:963.00px;top:583.49px;font-size:7.5px;color:#dadada;font-weight:normal;font-family:'Liberation Sans';transform:scaleX(0.857);">1ss</div>
<svg class="a" style="left:900.6px;top:612.0px;" width="10" height="7" viewBox="0 0 10 7" fill="none"><path d="M0.5 3.5 Q5 -1.5 9.5 3.5 Q5 8.5 0.5 3.5z" stroke="#a8a8a8" stroke-width="1"/><circle cx="5" cy="3.5" r="1.6" fill="#a8a8a8"/></svg>
<div class="t" style="left:942.30px;top:609.23px;font-size:13px;color:#dedede;font-weight:normal;font-family:'Liberation Serif';transform:scaleX(1.257);">T</div>
<div class="t" style="left:962.10px;top:611.88px;font-size:7.5px;color:#dadada;font-weight:normal;font-family:'Liberation Sans';transform:scaleX(0.791);">169</div>
<svg class="a" style="left:900.6px;top:640.8px;" width="10" height="7" viewBox="0 0 10 7" fill="none"><path d="M0.5 3.5 Q5 -1.5 9.5 3.5 Q5 8.5 0.5 3.5z" stroke="#a8a8a8" stroke-width="1"/><circle cx="5" cy="3.5" r="1.6" fill="#a8a8a8"/></svg>
<div class="t" style="left:942.30px;top:638.03px;font-size:13px;color:#dedede;font-weight:normal;font-family:'Liberation Serif';transform:scaleX(1.257);">T</div>
<div class="t" style="left:962.10px;top:640.68px;font-size:7.5px;color:#dadada;font-weight:normal;font-family:'Liberation Sans';transform:scaleX(0.944);">m</div>
<svg class="a" style="left:900.6px;top:668.5px;" width="10" height="7" viewBox="0 0 10 7" fill="none"><path d="M0.5 3.5 Q5 -1.5 9.5 3.5 Q5 8.5 0.5 3.5z" stroke="#a8a8a8" stroke-width="1"/><circle cx="5" cy="3.5" r="1.6" fill="#a8a8a8"/></svg>
<div class="t" style="left:942.30px;top:665.73px;font-size:13px;color:#dedede;font-weight:normal;font-family:'Liberation Serif';transform:scaleX(1.257);">T</div>
<div class="t" style="left:962.10px;top:668.38px;font-size:7.5px;color:#dadada;font-weight:normal;font-family:'Liberation Sans';transform:scaleX(0.953);">125.6</div>
<svg class="a" style="left:900.6px;top:697.1px;" width="10" height="7" viewBox="0 0 10 7" fill="none"><path d="M0.5 3.5 Q5 -1.5 9.5 3.5 Q5 8.5 0.5 3.5z" stroke="#a8a8a8" stroke-width="1"/><circle cx="5" cy="3.5" r="1.6" fill="#a8a8a8"/></svg>
<div class="t" style="left:942.30px;top:694.33px;font-size:13px;color:#dedede;font-weight:normal;font-family:'Liberation Serif';transform:scaleX(1.257);">T</div>
<div class="t" style="left:962.10px;top:696.99px;font-size:7.5px;color:#dadada;font-weight:normal;font-family:'Liberation Sans';transform:scaleX(0.810);">01.01.1996</div>
<div class="a" style="left:1066px;top:468px;width:8px;height:238px;background:#4b4b4b;"></div>
<div class="a" style="left:1067px;top:490.3px;width:6px;height:65px;background:#5e5e5e;"></div>
<svg class="a" style="left:1067px;top:475.5px;" width="6" height="4" viewBox="0 0 6 4" fill="none"><path d="M0.5 3.5 L3 1 L5.5 3.5" stroke="#888" stroke-width="0.9"/></svg>
<div class="a" style="left:896px;top:705.5px;width:178px;height:15px;background:#535353;"></div>
<div class="a" style="left:896px;top:705.5px;width:178px;height:1px;background:#4a4a4a;"></div>
<svg class="a" style="left:948px;top:711px;" width="11" height="6" viewBox="0 0 11 6" fill="none"><rect x="0.5" y="0.5" width="5.5" height="5" rx="2.5" stroke="#9a9a9a" stroke-width="1"/><rect x="5" y="0.5" width="5.5" height="5" rx="2.5" stroke="#9a9a9a" stroke-width="1"/></svg>
<div class="t" style="left:965.50px;top:710.14px;font-size:8px;color:#9a9a9a;font-weight:normal;font-family:'Liberation Sans';transform:scaleX(1.283);font-style:italic">fx</div>
<svg class="a" style="left:981.5px;top:709px;" width="10" height="10" viewBox="0 0 10 10" fill="none"><rect x="0.5" y="0.5" width="9" height="9" stroke="#9a9a9a" stroke-width="1"/><circle cx="5" cy="5" r="2.8" fill="#9a9a9a"/></svg>
<svg class="a" style="left:998.5px;top:709px;" width="10" height="10" viewBox="0 0 10 10" fill="none"><circle cx="5" cy="5" r="4.2" stroke="#9a9a9a" stroke-width="1"/><path d="M8 2 L2 8 A4.2 4.2 0 0 0 8 8z" fill="#9a9a9a"/></svg>
<svg class="a" style="left:1015px;top:709.5px;" width="10" height="9" viewBox="0 0 10 9" fill="none"><path d="M0 1 H3.5 L4.5 2 H10 V9 H0z" fill="#bdbdbd"/></svg>
<svg class="a" style="left:1032.5px;top:709px;" width="10" height="10" viewBox="0 0 10 10" fill="none"><rect x="0.5" y="0.5" width="9" height="9" stroke="#9a9a9a" stroke-width="1"/><path d="M5 2.5 V7.5 M2.5 5 H7.5" stroke="#9a9a9a" stroke-width="1"/></svg>
<svg class="a" style="left:1050px;top:708.5px;" width="9" height="11" viewBox="0 0 9 11" fill="none"><path d="M0 2 H9 M3 2 V0.5 H6 V2 M1.2 2 L2 10.5 H7 L7.8 2" stroke="#9a9a9a" stroke-width="1"/></svg>
</body></html>
